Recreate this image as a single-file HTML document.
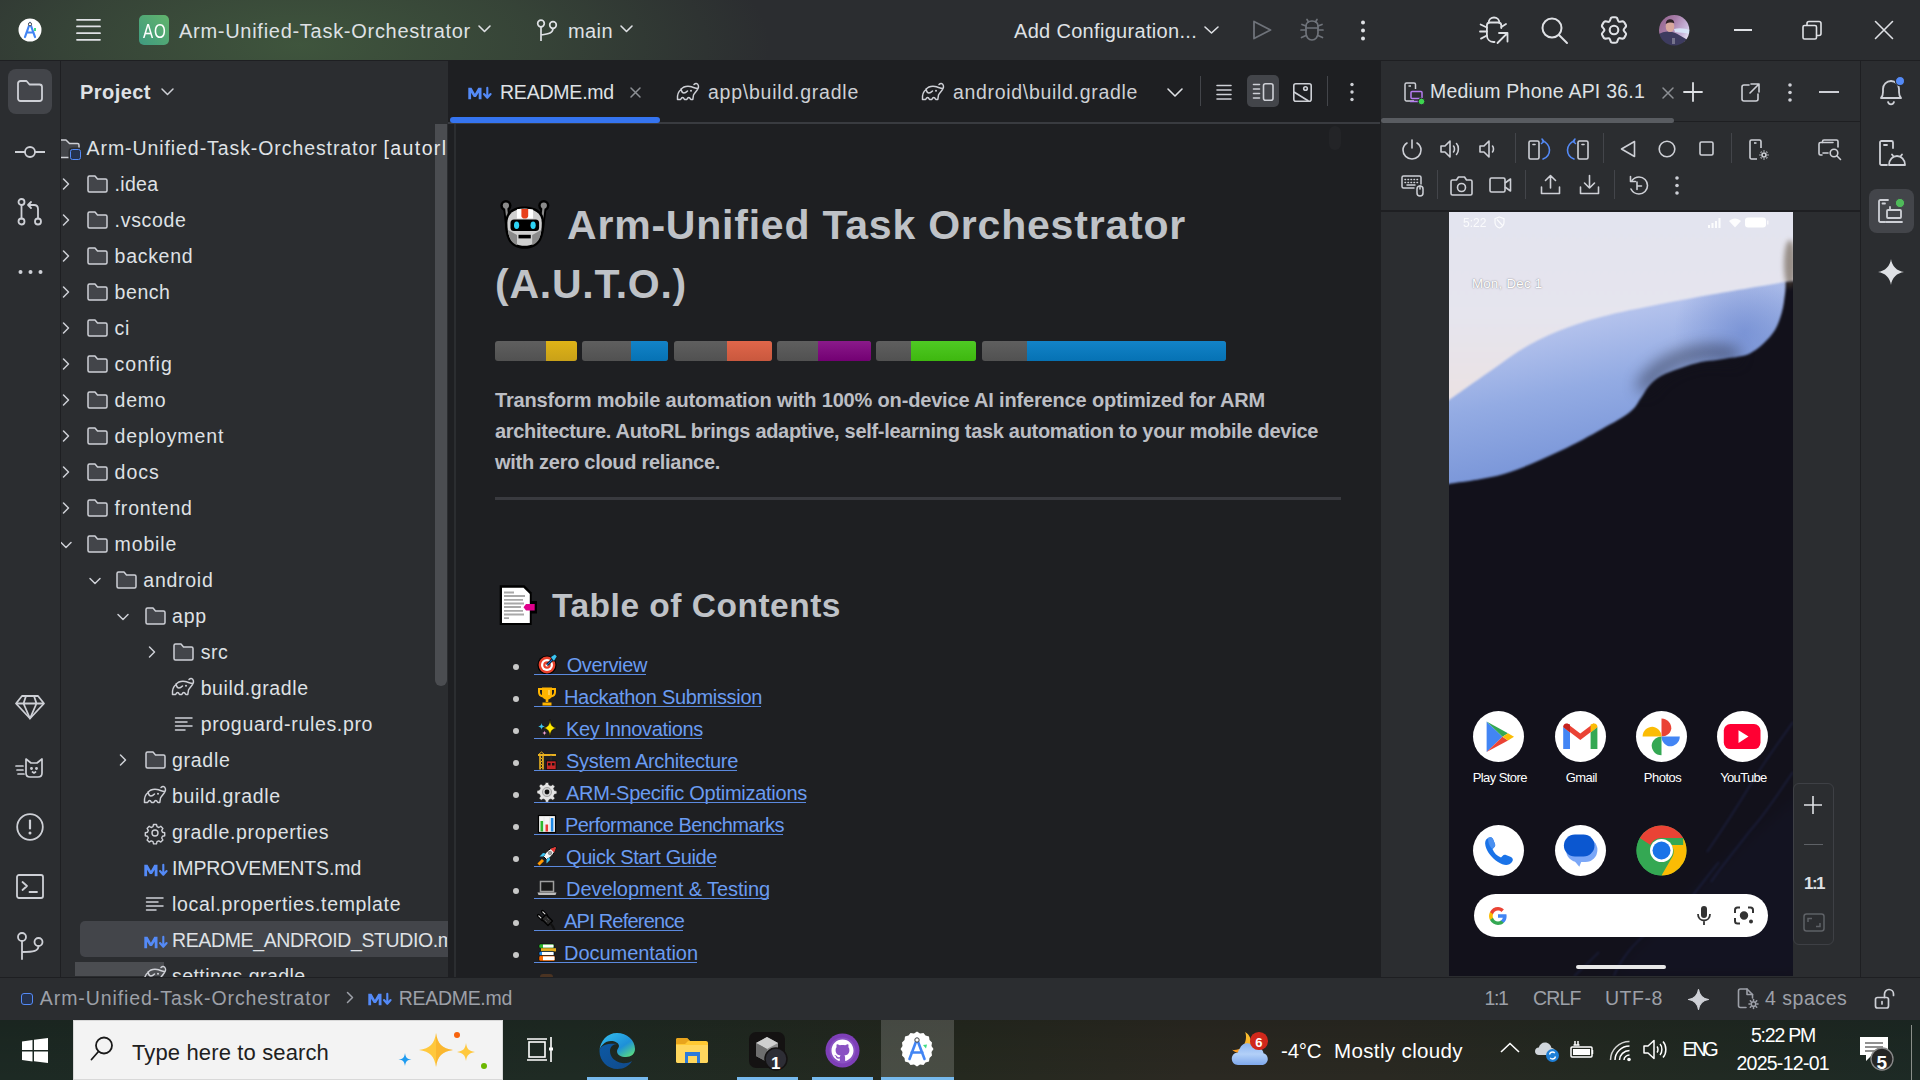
<!DOCTYPE html>
<html><head><meta charset="utf-8">
<style>
*{box-sizing:border-box;margin:0;padding:0}
html,body{width:1920px;height:1080px;overflow:hidden;background:#2B2D30;font-family:"Liberation Sans",sans-serif;color:#DFE1E5}
.abs{position:absolute}
svg{position:absolute;overflow:visible}
.t{position:absolute;white-space:nowrap;line-height:1}
</style></head><body>
<div class="abs" style="left:0px;top:0px;width:1920px;height:1080px;background:#2B2D30;border-radius:0px;"></div>
<div class="abs" style="left:0px;top:0px;width:1000px;height:60px;background:radial-gradient(ellipse 470px 170px at 300px 45px, rgba(86,132,76,.46) 0%, rgba(86,132,76,.26) 50%, rgba(86,132,76,0) 100%);border-radius:0px;"></div>
<div class="abs" style="left:0px;top:60px;width:1920px;height:1px;background:#1E1F22;border-radius:0px;"></div>
<div class="abs" style="left:60px;top:61px;width:1px;height:917px;background:#1E1F22;border-radius:0px;"></div>
<div class="abs" style="left:448px;top:61px;width:932px;height:917px;background:#1E1F22;border-radius:0px;"></div>
<div class="abs" style="left:1380px;top:61px;width:1px;height:917px;background:#1E1F22;border-radius:0px;"></div>
<div class="abs" style="left:1860px;top:61px;width:1px;height:917px;background:#1E1F22;border-radius:0px;"></div>
<div class="abs" style="left:0px;top:977px;width:1920px;height:1px;background:#1E1F22;border-radius:0px;"></div>
<svg style="left:18px;top:18px;" width="24" height="24" viewBox="0 0 24 24"><circle cx="12" cy="12" r="11.5" fill="#FFFFFF"/><path d="M12 5 L7 19 M12 5 L17 19 M8.5 14.5 L15.5 14.5" stroke="#4285F4" stroke-width="2.2" fill="none" stroke-linecap="round"/><circle cx="12" cy="6.2" r="1.6" fill="#fff" stroke="#333" stroke-width="0.8"/><rect x="16" y="10" width="2" height="3" fill="#3DDC84"/></svg>
<svg style="left:76px;top:18px;" width="25" height="24" viewBox="0 0 25 24"><g stroke="#DFE1E5" stroke-width="1.8" stroke-linecap="round"><path d="M1 1.8H24M1 8.4H24M1 15.2H24M1 21.8H24"/></g></svg>
<div class="abs" style="left:139px;top:15px;width:30px;height:30px;background:linear-gradient(225deg,#62B46C 0%,#3F9A80 100%);border-radius:5px;"></div>
<div class="t" style="left:143px;top:21.15px;font-size:20.5px;color:#FFFFFF;font-weight:400;letter-spacing:1.200px;font-family:'Liberation Sans',sans-serif;transform:scaleX(.74);transform-origin:0 0">AO</div>
<div class="t" style="left:179px;top:21.07px;font-size:20px;color:#DFE1E5;font-weight:400;letter-spacing:0.718px;font-family:'Liberation Sans',sans-serif;">Arm-Unified-Task-Orchestrator</div>
<svg style="left:478px;top:25px;" width="13" height="8" viewBox="0 0 13 8"><path d="M1 1L6.5 6.5L12 1" stroke="#DFE1E5" stroke-width="1.6" fill="none" stroke-linecap="round" stroke-linejoin="round"/></svg>
<svg style="left:536px;top:19px;" width="22" height="23" viewBox="0 0 22 23"><g stroke="#DFE1E5" stroke-width="1.7" fill="none"><circle cx="5" cy="4.5" r="3.3"/><circle cx="17" cy="6" r="3.3"/><path d="M5 8V22M17 9.3C17 14 13 15 5 16"/></g></svg>
<div class="t" style="left:568px;top:21.07px;font-size:20px;color:#DFE1E5;font-weight:400;letter-spacing:0.410px;font-family:'Liberation Sans',sans-serif;">main</div>
<svg style="left:620px;top:25px;" width="13" height="8" viewBox="0 0 13 8"><path d="M1 1L6.5 6.5L12 1" stroke="#DFE1E5" stroke-width="1.6" fill="none" stroke-linecap="round" stroke-linejoin="round"/></svg>
<div class="t" style="left:1014px;top:21.07px;font-size:20px;color:#DFE1E5;font-weight:400;letter-spacing:0.311px;font-family:'Liberation Sans',sans-serif;">Add Configuration...</div>
<svg style="left:1204px;top:26px;" width="15" height="8" viewBox="0 0 15 8"><path d="M1 1L7.5 7L14 1" stroke="#DFE1E5" stroke-width="1.6" fill="none" stroke-linecap="round" stroke-linejoin="round"/></svg>
<svg style="left:1251px;top:19px;" width="22" height="22" viewBox="0 0 22 22"><path d="M3 2.5L19.5 11L3 19.5Z" stroke="#6F737A" stroke-width="1.8" fill="none" stroke-linejoin="round"/></svg>
<svg style="left:1298px;top:17px;" width="28" height="26" viewBox="0 0 28 26"><g stroke="#6F737A" stroke-width="1.7" fill="none" stroke-linecap="round"><path d="M8 9.5C8 6 10.5 4 14 4S20 6 20 9.5V16C20 20 17.5 23 14 23S8 20 8 16Z"/><path d="M8 11H20M10.5 5L9 2.5M17.5 5L19 2.5M8 13H3M20 13H25M8 18.5L3.5 20.5M20 18.5L24.5 20.5M8 9L4 7.5M20 9L24 7.5"/></g></svg>
<svg style="left:1360px;top:20px;" width="6" height="22" viewBox="0 0 6 22"><g fill="#DFE1E5"><circle cx="3" cy="2.5" r="2"/><circle cx="3" cy="10.5" r="2"/><circle cx="3" cy="18.5" r="2"/></g></svg>
<svg style="left:1478px;top:15px;" width="32" height="30" viewBox="0 0 32 30"><g stroke="#DFE1E5" stroke-width="1.8" fill="none" stroke-linecap="round" stroke-linejoin="round"><path d="M10.7 7.5C10.7 4.5 13 2.5 16 2.5C19 2.5 21.3 4.5 21.3 7.5"/><path d="M23.3 13V10.5C23.3 8.5 22 7.5 20 7.5H12C10 7.5 8.9 8.5 8.9 10.5V20C8.9 24 11.5 27 15.5 27H16.5"/><path d="M2.6 9.5L8.9 12.5M2 16.5H8.9M3 23.6L8.9 20.5M28 9L23.3 12"/><path d="M19.5 28L29.5 18M21 18H29.5V26.5"/></g></svg>
<svg style="left:1540px;top:16px;" width="30" height="30" viewBox="0 0 30 30"><g stroke="#DFE1E5" stroke-width="2" fill="none" stroke-linecap="round"><circle cx="12" cy="12" r="9.5"/><path d="M19 19L27 27"/></g></svg>
<svg style="left:1600px;top:16px;" width="28" height="28" viewBox="0 0 28 28"><g stroke="#DFE1E5" stroke-width="2.1" fill="none" stroke-linejoin="round"><path d="M11.17 1.72 C11.97 0.99 13.06 1.27 14.00 1.27 C14.94 1.27 16.03 0.99 16.83 1.72 C17.63 2.46 17.74 5.07 18.80 5.69 C19.86 6.30 22.18 5.08 23.22 5.41 C24.25 5.73 24.55 6.82 25.02 7.64 C25.49 8.46 26.29 9.26 26.05 10.32 C25.81 11.38 23.60 12.77 23.60 14.00 C23.60 15.23 25.81 16.62 26.05 17.68 C26.29 18.74 25.49 19.54 25.02 20.36 C24.55 21.18 24.25 22.27 23.22 22.59 C22.18 22.92 19.86 21.70 18.80 22.31 C17.74 22.93 17.63 25.54 16.83 26.28 C16.03 27.01 14.94 26.73 14.00 26.73 C13.06 26.73 11.97 27.01 11.17 26.28 C10.37 25.54 10.26 22.93 9.20 22.31 C8.14 21.70 5.82 22.92 4.78 22.59 C3.75 22.27 3.45 21.18 2.98 20.36 C2.51 19.54 1.71 18.74 1.95 17.68 C2.19 16.62 4.40 15.23 4.40 14.00 C4.40 12.77 2.19 11.38 1.95 10.32 C1.71 9.26 2.51 8.46 2.98 7.64 C3.45 6.82 3.75 5.73 4.78 5.41 C5.82 5.08 8.14 6.30 9.20 5.69 C10.26 5.07 10.37 2.46 11.17 1.72Z"/><circle cx="14" cy="14" r="4.3"/></g></svg>
<svg style="left:1658.8px;top:14.8px;" width="30.4" height="30.4" viewBox="0 0 30.4 30.4"><defs><clipPath id="avc"><circle cx="15.2" cy="15.2" r="15.2"/></clipPath>
<filter id="avb" x="-20%" y="-20%" width="140%" height="140%"><feGaussianBlur stdDeviation=".7"/></filter>
<linearGradient id="avg" x1="0" y1="0" x2="1" y2=".6"><stop offset="0" stop-color="#8E5E86"/><stop offset=".45" stop-color="#A77CA8"/><stop offset=".8" stop-color="#C9B8DC"/><stop offset="1" stop-color="#EDEAF6"/></linearGradient></defs>
<g clip-path="url(#avc)"><g filter="url(#avb)"><rect x="-2" y="-2" width="35" height="35" fill="url(#avg)"/>
<path d="M15 14C20 12.5 26 13 32 15.5V19C26 18 20 17.5 16 17Z" fill="#D8E8FA" opacity=".9"/>
<path d="M-2 33V20C2 17.5 6 16.5 9 16.5C13 16.5 17 18 21 20.5L27 24C30 26 32 28 32 33Z" fill="#3E3A5E"/>
<ellipse cx="11" cy="11.5" rx="4.3" ry="5.6" fill="#D8A89E"/>
<path d="M6.8 9C6.8 5.5 9 4.2 11.3 4.2C13.8 4.2 15.3 5.8 15.3 8.3C13.5 7.3 9.5 7.3 6.8 9Z" fill="#2E2228"/>
<path d="M25 27L33 22V33H24Z" fill="#E8E6F0"/><rect x="13" y="23" width="3" height="6" fill="#9A9AAA" opacity=".6"/></g></g></svg>
<div class="abs" style="left:1734px;top:29px;width:18px;height:1.6px;background:#DFE1E5;border-radius:0px;"></div>
<svg style="left:1802px;top:20px;" width="22" height="20" viewBox="0 0 22 20"><g stroke="#DFE1E5" stroke-width="1.6" fill="none"><rect x="1" y="5.5" width="13.5" height="13.5" rx="1.5"/><path d="M5 5.5V3.5C5 2.4 5.9 1.5 7 1.5H17C18.1 1.5 19 2.4 19 3.5V13.5C19 14.6 18.1 15.5 17 15.5H14.5"/></g></svg>
<svg style="left:1874px;top:20px;" width="20" height="20" viewBox="0 0 20 20"><g stroke="#DFE1E5" stroke-width="1.6" stroke-linecap="round"><path d="M1.5 1.5L18.5 18.5M18.5 1.5L1.5 18.5"/></g></svg>
<div class="abs" style="left:8px;top:69px;width:44px;height:45px;background:#43454A;border-radius:8px;"></div>
<svg style="left:16px;top:79px;" width="28" height="24" viewBox="0 0 28 24"><path d="M2 4.5C2 3.1 3.1 2 4.5 2H10.5L13.5 5.5H23.5C24.9 5.5 26 6.6 26 8V19.5C26 20.9 24.9 22 23.5 22H4.5C3.1 22 2 20.9 2 19.5Z" stroke="#CED0D6" stroke-width="1.8" fill="none" stroke-linejoin="round"/></svg>
<svg style="left:15px;top:145px;" width="30" height="14" viewBox="0 0 30 14"><g stroke="#CED0D6" stroke-width="1.8" fill="none"><circle cx="15" cy="7" r="5"/><path d="M0 7H10M20 7H30"/></g></svg>
<svg style="left:17px;top:198px;" width="26" height="28" viewBox="0 0 26 28"><g stroke="#CED0D6" stroke-width="1.8" fill="none" stroke-linecap="round" stroke-linejoin="round"><circle cx="4.5" cy="4" r="3"/><circle cx="4.5" cy="23.5" r="3"/><circle cx="21" cy="23.5" r="3"/><path d="M4.5 7V20.5M21 20.5V11C21 8.5 19.5 7 17 7H11M14 4L11 7L14 10"/></g></svg>
<svg style="left:18px;top:269px;" width="26" height="6" viewBox="0 0 26 6"><g fill="#CED0D6"><circle cx="2.5" cy="3" r="2"/><circle cx="12.5" cy="3" r="2"/><circle cx="22.5" cy="3" r="2"/></g></svg>
<svg style="left:15px;top:694px;" width="30" height="26" viewBox="0 0 30 26"><g stroke="#CED0D6" stroke-width="1.8" fill="none" stroke-linejoin="round"><path d="M7 2H23L29 9.5L15 24.5L1 9.5Z"/><path d="M1 9.5H29M11 2L8.5 9.5L15 24.5L21.5 9.5L19 2"/></g></svg>
<svg style="left:15px;top:756px;" width="30" height="24" viewBox="0 0 30 24"><g stroke="#CED0D6" stroke-width="1.7" fill="none" stroke-linejoin="round" stroke-linecap="round"><path d="M11 3L16 7H22L27 3V17C27 19.5 25.5 21 23 21H15C12.5 21 11 19.5 11 17Z"/><path d="M1 10H8M2 14H8M3 18H9"/><circle cx="16.5" cy="12.5" r=".6" fill="#CED0D6"/><circle cx="21.5" cy="12.5" r=".6" fill="#CED0D6"/><path d="M17.5 16L19 17L20.5 16"/></g></svg>
<svg style="left:16px;top:813px;" width="28" height="28" viewBox="0 0 28 28"><g stroke="#CED0D6" stroke-width="1.8" fill="none"><circle cx="14" cy="14" r="12.8"/><path d="M14 7.5V15.5" stroke-linecap="round" stroke-width="2.2"/></g><circle cx="14" cy="20" r="1.5" fill="#CED0D6"/></svg>
<svg style="left:16px;top:874px;" width="28" height="26" viewBox="0 0 28 26"><g stroke="#CED0D6" stroke-width="1.8" fill="none" stroke-linejoin="round" stroke-linecap="round"><rect x="1" y="1" width="26" height="23" rx="2"/><path d="M6.5 8L11 12L6.5 16M13.5 18H21"/></g></svg>
<svg style="left:17px;top:932px;" width="28" height="28" viewBox="0 0 28 28"><g stroke="#CED0D6" stroke-width="1.8" fill="none" stroke-linecap="round"><circle cx="5" cy="5" r="4"/><circle cx="21.5" cy="10" r="4"/><path d="M5 9V27M21.5 14C21.5 19 17 20 5 20"/></g></svg>
<div class="t" style="left:80px;top:82.07px;font-size:20px;color:#DFE1E5;font-weight:700;letter-spacing:0.455px;font-family:'Liberation Sans',sans-serif;">Project</div>
<svg style="left:161px;top:88px;" width="13" height="8" viewBox="0 0 13 8"><path d="M1 1L6.5 6.5L12 1" stroke="#CED0D6" stroke-width="1.5" fill="none" stroke-linecap="round" stroke-linejoin="round"/></svg>
<div class="abs" style="left:80px;top:921px;width:368px;height:36px;background:#43454A;border-radius:0px;border-radius:5px 0 0 5px"></div>
<div class="abs" style="left:435px;top:124px;width:12px;height:562px;background:#4B4D51;border-radius:0px;border-radius:0 0 6px 6px"></div>
<div class="abs" style="left:75px;top:962px;width:89px;height:14px;background:#4B4D51;border-radius:0px;"></div>
<div class="abs" style="left:61px;top:120px;width:386px;height:857px;overflow:hidden">
<svg style="left:-11px;top:18.80000000000001px;" width="31" height="21" viewBox="0 0 31 21"><path d="M1 2.5C1 1.7 1.7 1 2.5 1H16L19.5 4.5H27.5C28.3 4.5 29 5.2 29 6V17C29 17.8 28.3 18.5 27.5 18.5H2.5C1.7 18.5 1 17.8 1 17Z" fill="#43454A" stroke="#CED0D6" stroke-width="1.5" stroke-linejoin="round"/></svg>
<div class="abs" style="left:9.299999999999997px;top:29.30000000000001px;width:11px;height:11px;background:#25324D;border-radius:2.5px;border:1.6px solid #548AF7;box-shadow:0 0 0 1.5px #2B2D30"></div>
<div class="t" style="left:25.599999999999994px;top:19.29px;font-size:19.5px;color:#DFE1E5;font-weight:400;letter-spacing:0.918px;font-family:'Liberation Sans',sans-serif;">Arm-Unified-Task-Orchestrator</div>
<div class="t" style="left:322.5px;top:19.29px;font-size:19.5px;color:#E6E8EC;font-weight:400;letter-spacing:1.400px;font-family:'Liberation Sans',sans-serif;">[autorl</div>
<svg style="left:1.0px;top:57.80000000000001px;" width="8" height="12" viewBox="0 0 8 12"><path d="M1.5 1L6.5 6L1.5 11" stroke="#CED0D6" stroke-width="1.5" fill="none" stroke-linecap="round" stroke-linejoin="round"/></svg>
<svg style="left:26.099999999999994px;top:54.80000000000001px;" width="21" height="18" viewBox="0 0 21 18"><path d="M1 2.5C1 1.7 1.7 1 2.5 1H8L10.5 4H18.5C19.3 4 20 4.7 20 5.5V15.5C20 16.3 19.3 17 18.5 17H2.5C1.7 17 1 16.3 1 15.5Z" fill="#43454A" stroke="#CED0D6" stroke-width="1.5" stroke-linejoin="round"/></svg>
<div class="t" style="left:53.599999999999994px;top:55.29px;font-size:19.5px;color:#DFE1E5;font-weight:400;letter-spacing:0.281px;font-family:'Liberation Sans',sans-serif;">.idea</div>
<svg style="left:1.0px;top:93.80000000000001px;" width="8" height="12" viewBox="0 0 8 12"><path d="M1.5 1L6.5 6L1.5 11" stroke="#CED0D6" stroke-width="1.5" fill="none" stroke-linecap="round" stroke-linejoin="round"/></svg>
<svg style="left:26.099999999999994px;top:90.80000000000001px;" width="21" height="18" viewBox="0 0 21 18"><path d="M1 2.5C1 1.7 1.7 1 2.5 1H8L10.5 4H18.5C19.3 4 20 4.7 20 5.5V15.5C20 16.3 19.3 17 18.5 17H2.5C1.7 17 1 16.3 1 15.5Z" fill="#43454A" stroke="#CED0D6" stroke-width="1.5" stroke-linejoin="round"/></svg>
<div class="t" style="left:53.599999999999994px;top:91.29px;font-size:19.5px;color:#DFE1E5;font-weight:400;letter-spacing:0.685px;font-family:'Liberation Sans',sans-serif;">.vscode</div>
<svg style="left:1.0px;top:129.8px;" width="8" height="12" viewBox="0 0 8 12"><path d="M1.5 1L6.5 6L1.5 11" stroke="#CED0D6" stroke-width="1.5" fill="none" stroke-linecap="round" stroke-linejoin="round"/></svg>
<svg style="left:26.099999999999994px;top:126.80000000000001px;" width="21" height="18" viewBox="0 0 21 18"><path d="M1 2.5C1 1.7 1.7 1 2.5 1H8L10.5 4H18.5C19.3 4 20 4.7 20 5.5V15.5C20 16.3 19.3 17 18.5 17H2.5C1.7 17 1 16.3 1 15.5Z" fill="#43454A" stroke="#CED0D6" stroke-width="1.5" stroke-linejoin="round"/></svg>
<div class="t" style="left:53.599999999999994px;top:127.29px;font-size:19.5px;color:#DFE1E5;font-weight:400;letter-spacing:0.709px;font-family:'Liberation Sans',sans-serif;">backend</div>
<svg style="left:1.0px;top:165.8px;" width="8" height="12" viewBox="0 0 8 12"><path d="M1.5 1L6.5 6L1.5 11" stroke="#CED0D6" stroke-width="1.5" fill="none" stroke-linecap="round" stroke-linejoin="round"/></svg>
<svg style="left:26.099999999999994px;top:162.8px;" width="21" height="18" viewBox="0 0 21 18"><path d="M1 2.5C1 1.7 1.7 1 2.5 1H8L10.5 4H18.5C19.3 4 20 4.7 20 5.5V15.5C20 16.3 19.3 17 18.5 17H2.5C1.7 17 1 16.3 1 15.5Z" fill="#43454A" stroke="#CED0D6" stroke-width="1.5" stroke-linejoin="round"/></svg>
<div class="t" style="left:53.599999999999994px;top:163.29px;font-size:19.5px;color:#DFE1E5;font-weight:400;letter-spacing:0.552px;font-family:'Liberation Sans',sans-serif;">bench</div>
<svg style="left:1.0px;top:201.8px;" width="8" height="12" viewBox="0 0 8 12"><path d="M1.5 1L6.5 6L1.5 11" stroke="#CED0D6" stroke-width="1.5" fill="none" stroke-linecap="round" stroke-linejoin="round"/></svg>
<svg style="left:26.099999999999994px;top:198.8px;" width="21" height="18" viewBox="0 0 21 18"><path d="M1 2.5C1 1.7 1.7 1 2.5 1H8L10.5 4H18.5C19.3 4 20 4.7 20 5.5V15.5C20 16.3 19.3 17 18.5 17H2.5C1.7 17 1 16.3 1 15.5Z" fill="#43454A" stroke="#CED0D6" stroke-width="1.5" stroke-linejoin="round"/></svg>
<div class="t" style="left:53.599999999999994px;top:199.29px;font-size:19.5px;color:#DFE1E5;font-weight:400;letter-spacing:0.553px;font-family:'Liberation Sans',sans-serif;">ci</div>
<svg style="left:1.0px;top:237.8px;" width="8" height="12" viewBox="0 0 8 12"><path d="M1.5 1L6.5 6L1.5 11" stroke="#CED0D6" stroke-width="1.5" fill="none" stroke-linecap="round" stroke-linejoin="round"/></svg>
<svg style="left:26.099999999999994px;top:234.8px;" width="21" height="18" viewBox="0 0 21 18"><path d="M1 2.5C1 1.7 1.7 1 2.5 1H8L10.5 4H18.5C19.3 4 20 4.7 20 5.5V15.5C20 16.3 19.3 17 18.5 17H2.5C1.7 17 1 16.3 1 15.5Z" fill="#43454A" stroke="#CED0D6" stroke-width="1.5" stroke-linejoin="round"/></svg>
<div class="t" style="left:53.599999999999994px;top:235.29px;font-size:19.5px;color:#DFE1E5;font-weight:400;letter-spacing:1.026px;font-family:'Liberation Sans',sans-serif;">config</div>
<svg style="left:1.0px;top:273.8px;" width="8" height="12" viewBox="0 0 8 12"><path d="M1.5 1L6.5 6L1.5 11" stroke="#CED0D6" stroke-width="1.5" fill="none" stroke-linecap="round" stroke-linejoin="round"/></svg>
<svg style="left:26.099999999999994px;top:270.8px;" width="21" height="18" viewBox="0 0 21 18"><path d="M1 2.5C1 1.7 1.7 1 2.5 1H8L10.5 4H18.5C19.3 4 20 4.7 20 5.5V15.5C20 16.3 19.3 17 18.5 17H2.5C1.7 17 1 16.3 1 15.5Z" fill="#43454A" stroke="#CED0D6" stroke-width="1.5" stroke-linejoin="round"/></svg>
<div class="t" style="left:53.599999999999994px;top:271.29px;font-size:19.5px;color:#DFE1E5;font-weight:400;letter-spacing:0.755px;font-family:'Liberation Sans',sans-serif;">demo</div>
<svg style="left:1.0px;top:309.8px;" width="8" height="12" viewBox="0 0 8 12"><path d="M1.5 1L6.5 6L1.5 11" stroke="#CED0D6" stroke-width="1.5" fill="none" stroke-linecap="round" stroke-linejoin="round"/></svg>
<svg style="left:26.099999999999994px;top:306.8px;" width="21" height="18" viewBox="0 0 21 18"><path d="M1 2.5C1 1.7 1.7 1 2.5 1H8L10.5 4H18.5C19.3 4 20 4.7 20 5.5V15.5C20 16.3 19.3 17 18.5 17H2.5C1.7 17 1 16.3 1 15.5Z" fill="#43454A" stroke="#CED0D6" stroke-width="1.5" stroke-linejoin="round"/></svg>
<div class="t" style="left:53.599999999999994px;top:307.29px;font-size:19.5px;color:#DFE1E5;font-weight:400;letter-spacing:0.877px;font-family:'Liberation Sans',sans-serif;">deployment</div>
<svg style="left:1.0px;top:345.8px;" width="8" height="12" viewBox="0 0 8 12"><path d="M1.5 1L6.5 6L1.5 11" stroke="#CED0D6" stroke-width="1.5" fill="none" stroke-linecap="round" stroke-linejoin="round"/></svg>
<svg style="left:26.099999999999994px;top:342.8px;" width="21" height="18" viewBox="0 0 21 18"><path d="M1 2.5C1 1.7 1.7 1 2.5 1H8L10.5 4H18.5C19.3 4 20 4.7 20 5.5V15.5C20 16.3 19.3 17 18.5 17H2.5C1.7 17 1 16.3 1 15.5Z" fill="#43454A" stroke="#CED0D6" stroke-width="1.5" stroke-linejoin="round"/></svg>
<div class="t" style="left:53.599999999999994px;top:343.29px;font-size:19.5px;color:#DFE1E5;font-weight:400;letter-spacing:0.999px;font-family:'Liberation Sans',sans-serif;">docs</div>
<svg style="left:1.0px;top:381.79999999999995px;" width="8" height="12" viewBox="0 0 8 12"><path d="M1.5 1L6.5 6L1.5 11" stroke="#CED0D6" stroke-width="1.5" fill="none" stroke-linecap="round" stroke-linejoin="round"/></svg>
<svg style="left:26.099999999999994px;top:378.79999999999995px;" width="21" height="18" viewBox="0 0 21 18"><path d="M1 2.5C1 1.7 1.7 1 2.5 1H8L10.5 4H18.5C19.3 4 20 4.7 20 5.5V15.5C20 16.3 19.3 17 18.5 17H2.5C1.7 17 1 16.3 1 15.5Z" fill="#43454A" stroke="#CED0D6" stroke-width="1.5" stroke-linejoin="round"/></svg>
<div class="t" style="left:53.599999999999994px;top:379.29px;font-size:19.5px;color:#DFE1E5;font-weight:400;letter-spacing:0.830px;font-family:'Liberation Sans',sans-serif;">frontend</div>
<svg style="left:-1.0px;top:420.79999999999995px;" width="12" height="8" viewBox="0 0 12 8"><path d="M1 1.5L6 6.5L11 1.5" stroke="#CED0D6" stroke-width="1.5" fill="none" stroke-linecap="round" stroke-linejoin="round"/></svg>
<svg style="left:26.099999999999994px;top:414.79999999999995px;" width="21" height="18" viewBox="0 0 21 18"><path d="M1 2.5C1 1.7 1.7 1 2.5 1H8L10.5 4H18.5C19.3 4 20 4.7 20 5.5V15.5C20 16.3 19.3 17 18.5 17H2.5C1.7 17 1 16.3 1 15.5Z" fill="#43454A" stroke="#CED0D6" stroke-width="1.5" stroke-linejoin="round"/></svg>
<div class="t" style="left:53.599999999999994px;top:415.29px;font-size:19.5px;color:#DFE1E5;font-weight:400;letter-spacing:0.858px;font-family:'Liberation Sans',sans-serif;">mobile</div>
<svg style="left:27.700000000000003px;top:456.79999999999995px;" width="12" height="8" viewBox="0 0 12 8"><path d="M1 1.5L6 6.5L11 1.5" stroke="#CED0D6" stroke-width="1.5" fill="none" stroke-linecap="round" stroke-linejoin="round"/></svg>
<svg style="left:54.79999999999998px;top:450.79999999999995px;" width="21" height="18" viewBox="0 0 21 18"><path d="M1 2.5C1 1.7 1.7 1 2.5 1H8L10.5 4H18.5C19.3 4 20 4.7 20 5.5V15.5C20 16.3 19.3 17 18.5 17H2.5C1.7 17 1 16.3 1 15.5Z" fill="#43454A" stroke="#CED0D6" stroke-width="1.5" stroke-linejoin="round"/></svg>
<div class="t" style="left:82.29999999999998px;top:451.29px;font-size:19.5px;color:#DFE1E5;font-weight:400;letter-spacing:0.734px;font-family:'Liberation Sans',sans-serif;">android</div>
<svg style="left:56.400000000000006px;top:492.79999999999995px;" width="12" height="8" viewBox="0 0 12 8"><path d="M1 1.5L6 6.5L11 1.5" stroke="#CED0D6" stroke-width="1.5" fill="none" stroke-linecap="round" stroke-linejoin="round"/></svg>
<svg style="left:83.5px;top:486.79999999999995px;" width="21" height="18" viewBox="0 0 21 18"><path d="M1 2.5C1 1.7 1.7 1 2.5 1H8L10.5 4H18.5C19.3 4 20 4.7 20 5.5V15.5C20 16.3 19.3 17 18.5 17H2.5C1.7 17 1 16.3 1 15.5Z" fill="#43454A" stroke="#CED0D6" stroke-width="1.5" stroke-linejoin="round"/></svg>
<div class="t" style="left:111.0px;top:487.29px;font-size:19.5px;color:#DFE1E5;font-weight:400;letter-spacing:0.784px;font-family:'Liberation Sans',sans-serif;">app</div>
<svg style="left:87.1px;top:525.8px;" width="8" height="12" viewBox="0 0 8 12"><path d="M1.5 1L6.5 6L1.5 11" stroke="#CED0D6" stroke-width="1.5" fill="none" stroke-linecap="round" stroke-linejoin="round"/></svg>
<svg style="left:112.19999999999999px;top:522.8px;" width="21" height="18" viewBox="0 0 21 18"><path d="M1 2.5C1 1.7 1.7 1 2.5 1H8L10.5 4H18.5C19.3 4 20 4.7 20 5.5V15.5C20 16.3 19.3 17 18.5 17H2.5C1.7 17 1 16.3 1 15.5Z" fill="#43454A" stroke="#CED0D6" stroke-width="1.5" stroke-linejoin="round"/></svg>
<div class="t" style="left:139.7px;top:523.29px;font-size:19.5px;color:#DFE1E5;font-weight:400;letter-spacing:0.567px;font-family:'Liberation Sans',sans-serif;">src</div>
<svg style="left:105.19999999999999px;top:552.8px;" width="30" height="26" viewBox="0 0 30 26"><g stroke="#CED0D6" stroke-width="1.5" fill="none" stroke-linecap="round" stroke-linejoin="round"><path d="M6.5 21.5C6 17 7.5 13.5 10 11.5C12 9 15.5 8 19 8.5C22 9 24 10.5 27 10.5M27 10.5C28 9 27.5 6 25.5 5.5C24.5 5.2 23.5 6 23 6.5M27 10.5C26 13 23.5 15 22.5 17L21.8 21.5H19.8C19 20 18.5 19.5 17.8 19.5C17 19.5 16.5 20 15.8 21.5H13.5C12.8 20 12.3 19.5 11.6 19.5C10.9 19.5 10.4 20 9.6 21.5H6.5M10 11C10.5 13.5 11.5 15 13 15C14.5 15 15.5 14 16.5 13"/></g><circle cx="20" cy="12.8" r="1" fill="#CED0D6"/></svg>
<div class="t" style="left:139.7px;top:559.29px;font-size:19.5px;color:#DFE1E5;font-weight:400;letter-spacing:0.589px;font-family:'Liberation Sans',sans-serif;">build.gradle</div>
<svg style="left:112.69999999999999px;top:595.8px;" width="20" height="16" viewBox="0 0 20 16"><g stroke="#CED0D6" stroke-width="1.5" stroke-linecap="round"><path d="M1.5 2H18M1.5 6H13M1.5 10H18M1.5 14H11"/></g></svg>
<div class="t" style="left:139.7px;top:595.29px;font-size:19.5px;color:#DFE1E5;font-weight:400;letter-spacing:0.665px;font-family:'Liberation Sans',sans-serif;">proguard-rules.pro</div>
<svg style="left:58.400000000000006px;top:633.8px;" width="8" height="12" viewBox="0 0 8 12"><path d="M1.5 1L6.5 6L1.5 11" stroke="#CED0D6" stroke-width="1.5" fill="none" stroke-linecap="round" stroke-linejoin="round"/></svg>
<svg style="left:83.5px;top:630.8px;" width="21" height="18" viewBox="0 0 21 18"><path d="M1 2.5C1 1.7 1.7 1 2.5 1H8L10.5 4H18.5C19.3 4 20 4.7 20 5.5V15.5C20 16.3 19.3 17 18.5 17H2.5C1.7 17 1 16.3 1 15.5Z" fill="#43454A" stroke="#CED0D6" stroke-width="1.5" stroke-linejoin="round"/></svg>
<div class="t" style="left:111.0px;top:631.29px;font-size:19.5px;color:#DFE1E5;font-weight:400;letter-spacing:0.714px;font-family:'Liberation Sans',sans-serif;">gradle</div>
<svg style="left:76.5px;top:660.8px;" width="30" height="26" viewBox="0 0 30 26"><g stroke="#CED0D6" stroke-width="1.5" fill="none" stroke-linecap="round" stroke-linejoin="round"><path d="M6.5 21.5C6 17 7.5 13.5 10 11.5C12 9 15.5 8 19 8.5C22 9 24 10.5 27 10.5M27 10.5C28 9 27.5 6 25.5 5.5C24.5 5.2 23.5 6 23 6.5M27 10.5C26 13 23.5 15 22.5 17L21.8 21.5H19.8C19 20 18.5 19.5 17.8 19.5C17 19.5 16.5 20 15.8 21.5H13.5C12.8 20 12.3 19.5 11.6 19.5C10.9 19.5 10.4 20 9.6 21.5H6.5M10 11C10.5 13.5 11.5 15 13 15C14.5 15 15.5 14 16.5 13"/></g><circle cx="20" cy="12.8" r="1" fill="#CED0D6"/></svg>
<div class="t" style="left:111.0px;top:667.29px;font-size:19.5px;color:#DFE1E5;font-weight:400;letter-spacing:0.664px;font-family:'Liberation Sans',sans-serif;">build.gradle</div>
<svg style="left:84.0px;top:702.8px;" width="20" height="20" viewBox="0 0 20 20"><g stroke="#CED0D6" stroke-width="1.4" fill="none" stroke-linejoin="round"><path d="M8.5 1.5h3l.5 2.2 1.8.8 2-1.2 2.1 2.1-1.2 2 .8 1.8 2.2.5v3l-2.2.5-.8 1.8 1.2 2-2.1 2.1-2-1.2-1.8.8-.5 2.2h-3l-.5-2.2-1.8-.8-2 1.2-2.1-2.1 1.2-2-.8-1.8-2.2-.5v-3l2.2-.5.8-1.8-1.2-2 2.1-2.1 2 1.2 1.8-.8z"/><circle cx="10" cy="10" r="3"/></g></svg>
<div class="t" style="left:111.0px;top:703.29px;font-size:19.5px;color:#DFE1E5;font-weight:400;letter-spacing:0.639px;font-family:'Liberation Sans',sans-serif;">gradle.properties</div>
<svg style="left:82.6px;top:744.3px;" width="26" height="13" viewBox="0 0 26 13"><path d="M0.3 12.2V0.8H3.5L6.9 6.8L10.3 0.8H13.5V12.2H10.7V5.8L8 10H5.8L3.1 5.8V12.2Z" fill="#548AF7"/><path d="M19.3 0.8V10.5M16 7L19.3 10.8L22.6 7" stroke="#548AF7" stroke-width="2.1" fill="none" stroke-linecap="round" stroke-linejoin="round"/></svg>
<div class="t" style="left:111.0px;top:739.29px;font-size:19.5px;color:#DFE1E5;font-weight:400;letter-spacing:-0.099px;font-family:'Liberation Sans',sans-serif;">IMPROVEMENTS.md</div>
<svg style="left:84.0px;top:775.8px;" width="20" height="16" viewBox="0 0 20 16"><g stroke="#CED0D6" stroke-width="1.5" stroke-linecap="round"><path d="M1.5 2H18M1.5 6H13M1.5 10H18M1.5 14H11"/></g></svg>
<div class="t" style="left:111.0px;top:775.29px;font-size:19.5px;color:#DFE1E5;font-weight:400;letter-spacing:0.670px;font-family:'Liberation Sans',sans-serif;">local.properties.template</div>
<svg style="left:82.6px;top:816.3px;" width="26" height="13" viewBox="0 0 26 13"><path d="M0.3 12.2V0.8H3.5L6.9 6.8L10.3 0.8H13.5V12.2H10.7V5.8L8 10H5.8L3.1 5.8V12.2Z" fill="#548AF7"/><path d="M19.3 0.8V10.5M16 7L19.3 10.8L22.6 7" stroke="#548AF7" stroke-width="2.1" fill="none" stroke-linecap="round" stroke-linejoin="round"/></svg>
<div class="t" style="left:111.0px;top:811.29px;font-size:19.5px;color:#DFE1E5;font-weight:400;letter-spacing:-0.376px;font-family:'Liberation Sans',sans-serif;">README_ANDROID_STUDIO.md</div>
<svg style="left:76.5px;top:840.8px;" width="30" height="26" viewBox="0 0 30 26"><g stroke="#CED0D6" stroke-width="1.5" fill="none" stroke-linecap="round" stroke-linejoin="round"><path d="M6.5 21.5C6 17 7.5 13.5 10 11.5C12 9 15.5 8 19 8.5C22 9 24 10.5 27 10.5M27 10.5C28 9 27.5 6 25.5 5.5C24.5 5.2 23.5 6 23 6.5M27 10.5C26 13 23.5 15 22.5 17L21.8 21.5H19.8C19 20 18.5 19.5 17.8 19.5C17 19.5 16.5 20 15.8 21.5H13.5C12.8 20 12.3 19.5 11.6 19.5C10.9 19.5 10.4 20 9.6 21.5H6.5M10 11C10.5 13.5 11.5 15 13 15C14.5 15 15.5 14 16.5 13"/></g><circle cx="20" cy="12.8" r="1" fill="#CED0D6"/></svg>
<div class="t" style="left:111.0px;top:847.29px;font-size:19.5px;color:#DFE1E5;font-weight:400;letter-spacing:0.450px;font-family:'Liberation Sans',sans-serif;">settings.gradle</div>
</div>
<div class="abs" style="left:448px;top:122px;width:932px;height:2px;background:#393B40;border-radius:0px;"></div>
<div class="abs" style="left:450px;top:117px;width:210px;height:6px;background:#3574F0;border-radius:3px;"></div>
<svg style="left:468.3px;top:86.5px;" width="26" height="13" viewBox="0 0 26 13"><path d="M0.3 12.2V0.8H3.5L6.9 6.8L10.3 0.8H13.5V12.2H10.7V5.8L8 10H5.8L3.1 5.8V12.2Z" fill="#548AF7"/><path d="M19.3 0.8V10.5M16 7L19.3 10.8L22.6 7" stroke="#548AF7" stroke-width="2.1" fill="none" stroke-linecap="round" stroke-linejoin="round"/></svg>
<div class="t" style="left:500px;top:82.69px;font-size:19.5px;color:#DFE1E5;font-weight:400;letter-spacing:-0.215px;font-family:'Liberation Sans',sans-serif;">README.md</div>
<svg style="left:630px;top:87px;" width="11" height="11" viewBox="0 0 11 11"><path d="M1 1L10 10M10 1L1 10" stroke="#8C8F94" stroke-width="1.5" stroke-linecap="round"/></svg>
<svg style="left:671px;top:78px;" width="30" height="26" viewBox="0 0 30 26"><g stroke="#CED0D6" stroke-width="1.5" fill="none" stroke-linecap="round" stroke-linejoin="round"><path d="M6.5 21.5C6 17 7.5 13.5 10 11.5C12 9 15.5 8 19 8.5C22 9 24 10.5 27 10.5M27 10.5C28 9 27.5 6 25.5 5.5C24.5 5.2 23.5 6 23 6.5M27 10.5C26 13 23.5 15 22.5 17L21.8 21.5H19.8C19 20 18.5 19.5 17.8 19.5C17 19.5 16.5 20 15.8 21.5H13.5C12.8 20 12.3 19.5 11.6 19.5C10.9 19.5 10.4 20 9.6 21.5H6.5M10 11C10.5 13.5 11.5 15 13 15C14.5 15 15.5 14 16.5 13"/></g><circle cx="20" cy="12.8" r="1" fill="#CED0D6"/></svg>
<div class="t" style="left:708px;top:82.69px;font-size:19.5px;color:#CDD0D5;font-weight:400;letter-spacing:0.764px;font-family:'Liberation Sans',sans-serif;">app\build.gradle</div>
<svg style="left:916px;top:78px;" width="30" height="26" viewBox="0 0 30 26"><g stroke="#CED0D6" stroke-width="1.5" fill="none" stroke-linecap="round" stroke-linejoin="round"><path d="M6.5 21.5C6 17 7.5 13.5 10 11.5C12 9 15.5 8 19 8.5C22 9 24 10.5 27 10.5M27 10.5C28 9 27.5 6 25.5 5.5C24.5 5.2 23.5 6 23 6.5M27 10.5C26 13 23.5 15 22.5 17L21.8 21.5H19.8C19 20 18.5 19.5 17.8 19.5C17 19.5 16.5 20 15.8 21.5H13.5C12.8 20 12.3 19.5 11.6 19.5C10.9 19.5 10.4 20 9.6 21.5H6.5M10 11C10.5 13.5 11.5 15 13 15C14.5 15 15.5 14 16.5 13"/></g><circle cx="20" cy="12.8" r="1" fill="#CED0D6"/></svg>
<div class="t" style="left:953px;top:82.69px;font-size:19.5px;color:#CDD0D5;font-weight:400;letter-spacing:0.685px;font-family:'Liberation Sans',sans-serif;">android\build.gradle</div>
<svg style="left:1167px;top:88px;" width="16" height="9" viewBox="0 0 16 9"><path d="M1 1L8 8L15 1" stroke="#DFE1E5" stroke-width="1.6" fill="none" stroke-linecap="round" stroke-linejoin="round"/></svg>
<div class="abs" style="left:1199.5px;top:76px;width:1.5px;height:30px;background:#43454A;border-radius:0px;"></div>
<svg style="left:1216px;top:84px;" width="16" height="16" viewBox="0 0 16 16"><g stroke="#CED0D6" stroke-width="1.6" stroke-linecap="round"><path d="M1 1.5H15M1 6H15M1 10.5H15M1 15H15"/></g></svg>
<div class="abs" style="left:1247px;top:75px;width:32px;height:32px;background:#43454A;border-radius:5px;"></div>
<svg style="left:1252px;top:83px;" width="22" height="19" viewBox="0 0 22 19"><g stroke="#CED0D6" stroke-width="1.6" fill="none" stroke-linecap="round"><path d="M1.5 1.5H7.5M1.5 6H7.5M1.5 10.5H7.5M1.5 15H7.5"/><rect x="11.5" y="0.8" width="9.5" height="16.5" rx="2"/></g></svg>
<svg style="left:1293px;top:83px;" width="19" height="19" viewBox="0 0 19 19"><g stroke="#CED0D6" stroke-width="1.6" fill="none" stroke-linejoin="round"><rect x="0.8" y="0.8" width="17.4" height="17.4" rx="2"/><circle cx="12.5" cy="5.5" r="1.8"/><path d="M1 9L15.5 18"/></g></svg>
<div class="abs" style="left:1326.5px;top:76px;width:1.5px;height:30px;background:#43454A;border-radius:0px;"></div>
<svg style="left:1349px;top:82px;" width="6" height="20" viewBox="0 0 6 20"><g fill="#CED0D6"><circle cx="3" cy="2.5" r="1.7"/><circle cx="3" cy="10" r="1.7"/><circle cx="3" cy="17.5" r="1.7"/></g></svg>
<div class="abs" style="left:454px;top:124px;width:2px;height:853px;background:#2B2D30;border-radius:0px;"></div>
<div class="abs" style="left:1329px;top:126px;width:12px;height:24px;background:#232427;border-radius:6px;"></div>
<svg style="left:499px;top:199px;" width="50" height="50" viewBox="0 0 50 50"><g>
<path d="M6.9 6.6L9.5 30M44.8 6.6L42 30" stroke="#000" stroke-width="6" stroke-linecap="round"/>
<circle cx="6.9" cy="6.6" r="5.6" fill="#000"/><circle cx="44.8" cy="6.6" r="5.6" fill="#000"/>
<path d="M6.9 6.6L9.5 30M44.8 6.6L42 30" stroke="#8A8A8A" stroke-width="2.2" stroke-linecap="round"/>
<circle cx="6.9" cy="6.6" r="3.1" fill="#8A8A8A"/><circle cx="44.8" cy="6.6" r="3.1" fill="#8A8A8A"/>
<path d="M25.6 7.5C36 7.5 45.2 12 45.2 24C45.2 30 44.5 36 42 41C39 46.5 33 49.8 25.6 49.8C18.2 49.8 12.2 46.5 9.2 41C6.7 36 6 30 6 24C6 12 15.2 7.5 25.6 7.5Z" fill="#000"/>
<path d="M25.6 9.8C34.5 9.8 42.8 13.5 42.8 24C42.8 29.5 42.2 35 40 39.5C37.5 44 32.5 46.8 25.6 46.8C18.7 46.8 13.7 44 11.2 39.5C9 35 8.4 29.5 8.4 24C8.4 13.5 16.7 9.8 25.6 9.8Z" fill="#CFCFCF"/>
<path d="M9 31C9.5 36 10.5 39 12 41.5C14 44 16 45.5 18 46.2V36Z" fill="#8A8A8A"/><path d="M42.2 31C41.7 36 40.7 39 39.2 41.5C37.2 44 35.2 45.5 33.2 46.2V36Z" fill="#8A8A8A"/>
<path d="M17.9 10.3C20.5 9.9 23 9.8 25.6 9.8C28.2 9.8 31.5 10 34.1 10.5V19.5H17.9Z" fill="#FFFFFF"/>
<path d="M22.4 9.9H29.2V17C29.2 18.5 27.8 19.6 25.8 19.6C23.8 19.6 22.4 18.5 22.4 17Z" fill="#E8401C"/>
<rect x="11.5" y="20.5" width="28.6" height="11.6" rx="3.5" fill="#000"/>
<ellipse cx="17.6" cy="26.3" rx="2.6" ry="3.8" fill="#2CD3F5"/><ellipse cx="34.1" cy="26.3" rx="2.6" ry="3.8" fill="#2CD3F5"/>
<rect x="19.5" y="35.8" width="12.3" height="3.6" fill="#000"/>
</g></svg>
<div class="t" style="left:567px;top:204.89px;font-size:41px;color:#BFC2C7;font-weight:700;letter-spacing:0.787px;font-family:'Liberation Sans',sans-serif;">Arm-Unified Task Orchestrator</div>
<div class="t" style="left:495px;top:263.79px;font-size:41px;color:#BFC2C7;font-weight:700;letter-spacing:0.752px;font-family:'Liberation Sans',sans-serif;">(A.U.T.O.)</div>
<div class="abs" style="left:495px;top:341px;width:82px;height:20px;border-radius:3px;overflow:hidden;background:linear-gradient(#5F5F5F,#515151)"><div class="abs" style="left:51px;top:0;width:31px;height:20px;background:linear-gradient(#DFB317,#C9A118)"></div></div>
<div class="abs" style="left:582px;top:341px;width:86px;height:20px;border-radius:3px;overflow:hidden;background:linear-gradient(#5F5F5F,#515151)"><div class="abs" style="left:49px;top:0;width:37px;height:20px;background:linear-gradient(#1283C8,#0672B4)"></div></div>
<div class="abs" style="left:674px;top:341px;width:98px;height:20px;border-radius:3px;overflow:hidden;background:linear-gradient(#5F5F5F,#515151)"><div class="abs" style="left:53px;top:0;width:45px;height:20px;background:linear-gradient(#E0664A,#C9583E)"></div></div>
<div class="abs" style="left:777px;top:341px;width:94px;height:20px;border-radius:3px;overflow:hidden;background:linear-gradient(#5F5F5F,#515151)"><div class="abs" style="left:41px;top:0;width:53px;height:20px;background:linear-gradient(#8A1A8A,#730073)"></div></div>
<div class="abs" style="left:876px;top:341px;width:100px;height:20px;border-radius:3px;overflow:hidden;background:linear-gradient(#5F5F5F,#515151)"><div class="abs" style="left:35px;top:0;width:65px;height:20px;background:linear-gradient(#4FC924,#3EB80F)"></div></div>
<div class="abs" style="left:982px;top:341px;width:244px;height:20px;border-radius:3px;overflow:hidden;background:linear-gradient(#5F5F5F,#515151)"><div class="abs" style="left:45px;top:0;width:199px;height:20px;background:linear-gradient(#1283C8,#0672B4)"></div></div>
<div class="t" style="left:495px;top:389.87px;font-size:20px;color:#BCBEC4;font-weight:700;letter-spacing:-0.168px;font-family:'Liberation Sans',sans-serif;">Transform mobile automation with 100% on-device AI inference optimized for ARM</div>
<div class="t" style="left:495px;top:420.87px;font-size:20px;color:#BCBEC4;font-weight:700;letter-spacing:-0.305px;font-family:'Liberation Sans',sans-serif;">architecture. AutoRL brings adaptive, self-learning task automation to your mobile device</div>
<div class="t" style="left:495px;top:451.87px;font-size:20px;color:#BCBEC4;font-weight:700;letter-spacing:-0.291px;font-family:'Liberation Sans',sans-serif;">with zero cloud reliance.</div>
<div class="abs" style="left:495px;top:497px;width:846px;height:3px;background:#393A3F;border-radius:0px;"></div>
<svg style="left:498px;top:584px;" width="42" height="42" viewBox="0 0 42 42"><path d="M1.7 1.3H26.5L33.7 8.5V41H1.7Z" fill="#000"/>
<rect x="25" y="17" width="14" height="12.5" fill="#000"/>
<path d="M4 3.8H25.5L31.8 10V39H4Z" fill="#FFFFFF"/>
<g stroke="#A8A8A8" stroke-width="1.8"><path d="M6 8.5H16M6 12H27M6 15.8H25M6 19.5H26M6 23H23M6 26.8H25M6 30.5H26M6 34.2H11"/></g>
<path d="M28 20H36.7V26.6H28L25.5 23.3Z" fill="#E0008C"/></svg>
<div class="t" style="left:552px;top:589.04px;font-size:33.5px;color:#BFC2C7;font-weight:700;letter-spacing:0.506px;font-family:'Liberation Sans',sans-serif;">Table of Contents</div>
<div class="abs" style="left:513px;top:663.7px;width:6px;height:6px;border-radius:50%;background:#C8C8C8"></div>
<svg style="left:537px;top:654.2px;" width="20" height="20" viewBox="0 0 20 20"><circle cx="10" cy="11" r="9.6" fill="#000"/><circle cx="10" cy="11" r="8.4" fill="#E8412C"/><circle cx="10" cy="11" r="6" fill="#fff"/><circle cx="10" cy="11" r="3.8" fill="#E8412C"/><circle cx="10" cy="11" r="1.6" fill="#fff"/><path d="M10 11L16.5 4.5" stroke="#000" stroke-width="2.6"/><path d="M10 11L16.5 4.5" stroke="#1E6FC8" stroke-width="1.3"/><path d="M13.5 3L18 0L20 2.5L17 7.5Z" fill="#3CC3F0" stroke="#000" stroke-width=".6"/></svg>
<div class="t" style="left:566.7px;top:655.27px;font-size:20px;color:#6A9CF2;font-weight:400;letter-spacing:-0.382px;font-family:'Liberation Sans',sans-serif;">Overview</div>
<div class="abs" style="left:534px;top:673.6px;width:112px;height:1.5px;background:#5B89DE;border-radius:0px;"></div>
<div class="abs" style="left:513px;top:695.7px;width:6px;height:6px;border-radius:50%;background:#C8C8C8"></div>
<svg style="left:537px;top:686.2px;" width="20" height="20" viewBox="0 0 20 20"><path d="M5 1.5H15V8.5C15 11.5 13 13.5 10 13.5S5 11.5 5 8.5Z" fill="#FFB400"/><path d="M5.2 3H2V6C2 8.5 3.5 10 6 10.5M14.8 3H18V6C18 8.5 16.5 10 14 10.5" stroke="#FFB400" stroke-width="2" fill="none"/><path d="M8.7 13H11.3V16H8.7Z" fill="#FFB400"/><path d="M5.5 16.5H14.5V19.5H5.5Z" fill="#FFB400"/><path d="M12 4V9" stroke="#FFE9A0" stroke-width="1"/></svg>
<div class="t" style="left:564px;top:687.27px;font-size:20px;color:#6A9CF2;font-weight:400;letter-spacing:-0.328px;font-family:'Liberation Sans',sans-serif;">Hackathon Submission</div>
<div class="abs" style="left:534px;top:705.6px;width:227px;height:1.5px;background:#5B89DE;border-radius:0px;"></div>
<div class="abs" style="left:513px;top:727.7px;width:6px;height:6px;border-radius:50%;background:#C8C8C8"></div>
<svg style="left:537px;top:718.2px;" width="20" height="20" viewBox="0 0 20 20"><path d="M13 1.5C13.6 7 15 9 19.5 10C15 11 13.6 13 13 18.5C12.4 13 11 11 6.5 10C11 9 12.4 7 13 1.5Z" fill="#FFE800" stroke="#000" stroke-width=".5"/><path d="M4.5 5C4.8 7.3 5.5 8 7.8 8.4C5.5 8.8 4.8 9.5 4.5 11.8C4.2 9.5 3.5 8.8 1.2 8.4C3.5 8 4.2 7.3 4.5 5Z" fill="#3CC8F0"/><path d="M7.5 12.5C7.7 14.2 8.2 14.8 9.9 15C8.2 15.2 7.7 15.8 7.5 17.5C7.3 15.8 6.8 15.2 5.1 15C6.8 14.8 7.3 14.2 7.5 12.5Z" fill="#F0A0D0"/></svg>
<div class="t" style="left:566px;top:719.27px;font-size:20px;color:#6A9CF2;font-weight:400;letter-spacing:-0.355px;font-family:'Liberation Sans',sans-serif;">Key Innovations</div>
<div class="abs" style="left:534px;top:737.6px;width:168px;height:1.5px;background:#5B89DE;border-radius:0px;"></div>
<div class="abs" style="left:513px;top:759.7px;width:6px;height:6px;border-radius:50%;background:#C8C8C8"></div>
<svg style="left:537px;top:750.2px;" width="20" height="20" viewBox="0 0 20 20"><path d="M3 19.5V4M6 19.5V4" stroke="#E8B020" stroke-width="1.6"/><path d="M3 7L6 10L3 13L6 16L3 19" stroke="#E8B020" stroke-width="1" fill="none"/><path d="M1 5H19" stroke="#E8B020" stroke-width="2"/><path d="M4.5 2L8 5M4.5 2L1 5" stroke="#E8B020" stroke-width="1"/><path d="M14 5.5V11" stroke="#333" stroke-width=".8"/><rect x="9.5" y="11" width="9.5" height="8.5" fill="#C62828" stroke="#000" stroke-width=".6"/><rect x="11" y="13" width="2.5" height="2.5" fill="#111"/><rect x="15" y="13" width="2.5" height="2.5" fill="#111"/></svg>
<div class="t" style="left:566px;top:751.27px;font-size:20px;color:#6A9CF2;font-weight:400;letter-spacing:-0.308px;font-family:'Liberation Sans',sans-serif;">System Architecture</div>
<div class="abs" style="left:534px;top:769.6px;width:203px;height:1.5px;background:#5B89DE;border-radius:0px;"></div>
<div class="abs" style="left:513px;top:791.7px;width:6px;height:6px;border-radius:50%;background:#C8C8C8"></div>
<svg style="left:537px;top:782.2px;" width="20" height="20" viewBox="0 0 20 20"><path d="M8.6 0.5h2.8l.5 2.4 2 .9 2-1.3 2 2-1.3 2 .9 2 2.4.5v2.8l-2.4.5-.9 2 1.3 2-2 2-2-1.3-2 .9-.5 2.4H8.6l-.5-2.4-2-.9-2 1.3-2-2 1.3-2-.9-2L0 11.4V8.6l2.4-.5.9-2-1.3-2 2-2 2 1.3 2-.9z" fill="#E4E4E4" stroke="#222" stroke-width=".6"/><circle cx="10" cy="10" r="4.6" fill="#CFCFCF" stroke="#999" stroke-width=".8"/><circle cx="10" cy="10" r="2.4" fill="#111"/></svg>
<div class="t" style="left:566px;top:783.27px;font-size:20px;color:#6A9CF2;font-weight:400;letter-spacing:-0.263px;font-family:'Liberation Sans',sans-serif;">ARM-Specific Optimizations</div>
<div class="abs" style="left:534px;top:801.6px;width:272px;height:1.5px;background:#5B89DE;border-radius:0px;"></div>
<div class="abs" style="left:513px;top:823.7px;width:6px;height:6px;border-radius:50%;background:#C8C8C8"></div>
<svg style="left:537px;top:814.2px;" width="20" height="20" viewBox="0 0 20 20"><rect x="1.5" y="1.5" width="17" height="17" fill="#F5F5F5" stroke="#000" stroke-width="1.2"/><path d="M7 2V18M12.5 2V18" stroke="#DDD" stroke-width=".6"/><rect x="3.5" y="7" width="2.6" height="10.5" fill="#2DB82D"/><rect x="8.5" y="10.5" width="2.6" height="7" fill="#E53935"/><rect x="13.8" y="4" width="2.6" height="13.5" fill="#1E88E5"/></svg>
<div class="t" style="left:565px;top:815.27px;font-size:20px;color:#6A9CF2;font-weight:400;letter-spacing:-0.555px;font-family:'Liberation Sans',sans-serif;">Performance Benchmarks</div>
<div class="abs" style="left:534px;top:833.6px;width:249px;height:1.5px;background:#5B89DE;border-radius:0px;"></div>
<div class="abs" style="left:513px;top:855.7px;width:6px;height:6px;border-radius:50%;background:#C8C8C8"></div>
<svg style="left:537px;top:846.2px;" width="20" height="20" viewBox="0 0 20 20"><path d="M19 1C14 1.5 9 5 6.5 10.5L9.5 13.5C15 11 18.5 6 19 1Z" fill="#F4F4F4" stroke="#000" stroke-width="1"/><path d="M19 1C17 1.3 15 2 13.5 3L17 6.5C18 5 18.7 3 19 1Z" fill="#E53935"/><circle cx="13" cy="7" r="1.8" fill="#9E9E9E" stroke="#555" stroke-width=".5"/><path d="M6.5 10.5L2.5 10.5L6 7L9 7.5M9.5 13.5L9.5 17.5L13 14L12.5 11" fill="#3CC3F0"/><path d="M6 14L1.5 18.5" stroke="#FF9800" stroke-width="3"/></svg>
<div class="t" style="left:566px;top:847.27px;font-size:20px;color:#6A9CF2;font-weight:400;letter-spacing:-0.403px;font-family:'Liberation Sans',sans-serif;">Quick Start Guide</div>
<div class="abs" style="left:534px;top:865.6px;width:182px;height:1.5px;background:#5B89DE;border-radius:0px;"></div>
<div class="abs" style="left:513px;top:887.7px;width:6px;height:6px;border-radius:50%;background:#C8C8C8"></div>
<svg style="left:537px;top:878.2px;" width="20" height="20" viewBox="0 0 20 20"><rect x="3.5" y="3.5" width="13" height="10" fill="#1A1A1A" stroke="#9E9E9E" stroke-width="1.5"/><path d="M0.5 14.5H19.5L18.5 17H1.5Z" fill="#BDBDBD"/></svg>
<div class="t" style="left:566px;top:879.27px;font-size:20px;color:#6A9CF2;font-weight:400;letter-spacing:-0.062px;font-family:'Liberation Sans',sans-serif;">Development &amp; Testing</div>
<div class="abs" style="left:534px;top:897.6px;width:235px;height:1.5px;background:#5B89DE;border-radius:0px;"></div>
<div class="abs" style="left:513px;top:919.7px;width:6px;height:6px;border-radius:50%;background:#C8C8C8"></div>
<svg style="left:537px;top:910.2px;" width="20" height="20" viewBox="0 0 20 20"><path d="M1.5 5.5L5.5 9.5M5.5 1.5L9.5 5.5" stroke="#000" stroke-width="3.2" stroke-linecap="round"/><path d="M1.8 5.8L5.2 9.2M5.8 1.8L9.2 5.2" stroke="#DDD" stroke-width="1.1" stroke-linecap="round"/><path d="M4.5 9L9 4.5L15.5 11L11 15.5Z" fill="#2A2A2A" stroke="#000" stroke-width="1.2" stroke-linejoin="round"/><path d="M8 10L10 12M10 8L12 10" stroke="#555" stroke-width=".8"/><path d="M13.5 13.5C15.5 15.5 16.5 17 17.5 20" stroke="#111" stroke-width="2.2" fill="none"/></svg>
<div class="t" style="left:564px;top:911.27px;font-size:20px;color:#6A9CF2;font-weight:400;letter-spacing:-0.775px;font-family:'Liberation Sans',sans-serif;">API Reference</div>
<div class="abs" style="left:534px;top:929.6px;width:149px;height:1.5px;background:#5B89DE;border-radius:0px;"></div>
<div class="abs" style="left:513px;top:951.7px;width:6px;height:6px;border-radius:50%;background:#C8C8C8"></div>
<svg style="left:537px;top:942.2px;" width="20" height="20" viewBox="0 0 20 20"><rect x="2" y="2" width="15" height="4.2" rx="1.5" fill="#2DB82D" stroke="#000" stroke-width=".5"/><rect x="6" y="2.6" width="10.5" height="3" fill="#FFFFFF"/><rect x="4" y="6.2" width="15" height="3.2" fill="#E8B020"/><rect x="2" y="9.4" width="15" height="4.2" rx="1.5" fill="#1E88E5" stroke="#000" stroke-width=".5"/><rect x="5" y="10" width="11.5" height="3" fill="#FFFFFF"/><rect x="2" y="13.6" width="16" height="5.5" rx="1.5" fill="#FF6D00" stroke="#000" stroke-width=".5"/><rect x="6" y="14.4" width="11.5" height="3.8" fill="#FFFFFF"/></svg>
<div class="t" style="left:564px;top:943.27px;font-size:20px;color:#6A9CF2;font-weight:400;letter-spacing:-0.041px;font-family:'Liberation Sans',sans-serif;">Documentation</div>
<div class="abs" style="left:534px;top:961.6px;width:163px;height:1.5px;background:#5B89DE;border-radius:0px;"></div>
<div class="abs" style="left:540px;top:973.5px;width:13px;height:3.5px;background:#4A3322;border-radius:7px 7px 0 0px;"></div>
<svg style="left:1403px;top:82px;" width="22" height="22" viewBox="0 0 22 22"><g fill="none" stroke-linejoin="round"><path d="M11 19H3.5C2.7 19 2 18.3 2 17.5V2.5C2 1.7 2.7 1 3.5 1H11C11.8 1 12.5 1.7 12.5 2.5V7" stroke="#CED0D6" stroke-width="1.5"/><path d="M5.5 4H8" stroke="#CED0D6" stroke-width="1.5"/><rect x="8" y="9.5" width="11" height="7" rx="1" stroke="#B57CF0" stroke-width="1.5"/><path d="M7 19.5H19" stroke="#B57CF0" stroke-width="1.5"/></g><circle cx="18.5" cy="19.5" r="3.3" fill="#3DD54F" stroke="#2B2D30" stroke-width="1"/></svg>
<div class="t" style="left:1430px;top:82.29px;font-size:19.5px;color:#DFE1E5;font-weight:400;letter-spacing:0.223px;font-family:'Liberation Sans',sans-serif;">Medium Phone API 36.1</div>
<svg style="left:1662px;top:87px;" width="12" height="12" viewBox="0 0 12 12"><path d="M1 1L11 11M11 1L1 11" stroke="#8C8F94" stroke-width="1.5" stroke-linecap="round"/></svg>
<svg style="left:1683px;top:82px;" width="20" height="20" viewBox="0 0 20 20"><path d="M10 1V19M1 10H19" stroke="#DFE1E5" stroke-width="1.8" stroke-linecap="round"/></svg>
<svg style="left:1741px;top:83px;" width="19" height="19" viewBox="0 0 19 19"><g stroke="#CED0D6" stroke-width="1.6" fill="none" stroke-linecap="round" stroke-linejoin="round"><path d="M8 2H3C2 2 1 3 1 4V16C1 17 2 18 3 18H15C16 18 17 17 17 16V11"/><path d="M10 1H18V9M18 1L9 10"/></g></svg>
<svg style="left:1787px;top:83px;" width="6" height="19" viewBox="0 0 6 19"><g fill="#CED0D6"><circle cx="3" cy="2" r="1.8"/><circle cx="3" cy="9.5" r="1.8"/><circle cx="3" cy="17" r="1.8"/></g></svg>
<div class="abs" style="left:1819px;top:91px;width:20px;height:1.8px;background:#CED0D6;border-radius:0px;"></div>
<div class="abs" style="left:1381px;top:121px;width:479px;height:1px;background:#1E1F22;border-radius:0px;"></div>
<div class="abs" style="left:1381px;top:118px;width:293px;height:4.5px;background:#595C61;border-radius:2.5px;"></div>
<svg style="left:1402px;top:139px;" width="20" height="21" viewBox="0 0 20 21"><g stroke="#CED0D6" stroke-width="1.6" fill="none" stroke-linecap="round"><path d="M10 1V9"/><path d="M5 4C2.5 5.7 1 8.3 1 11C1 16 5 20 10 20S19 16 19 11C19 8.3 17.5 5.7 15 4"/></g></svg>
<svg style="left:1440px;top:139px;" width="22" height="20" viewBox="0 0 22 20"><g stroke="#CED0D6" stroke-width="1.6" fill="none" stroke-linejoin="round" stroke-linecap="round"><path d="M1 7H5L10 2V18L5 13H1Z"/><path d="M13.5 7C14.8 8.5 14.8 11.5 13.5 13M16.5 4.5C19 7 19 13 16.5 15.5"/></g></svg>
<svg style="left:1479px;top:139px;" width="20" height="20" viewBox="0 0 20 20"><g stroke="#CED0D6" stroke-width="1.6" fill="none" stroke-linejoin="round" stroke-linecap="round"><path d="M1 7H5L10 2V18L5 13H1Z"/><path d="M13.5 7C14.8 8.5 14.8 11.5 13.5 13"/></g></svg>
<div class="abs" style="left:1514.5px;top:133px;width:1.5px;height:30px;background:#43454A;border-radius:0px;"></div>
<svg style="left:1528px;top:138px;" width="23" height="22" viewBox="0 0 23 22"><g fill="none" stroke-width="1.6" stroke-linejoin="round" stroke-linecap="round"><rect x="1" y="3" width="10" height="18" rx="1.5" stroke="#CED0D6"/><path d="M5 6.5H7" stroke="#CED0D6"/><path d="M14.5 3C18.5 4 21.5 8 21.5 12C21.5 16 19 19.5 15 21M14 1L16 3.5L13.5 5.5" stroke="#548AF7"/></g></svg>
<svg style="left:1566px;top:138px;" width="23" height="22" viewBox="0 0 23 22"><g fill="none" stroke-width="1.6" stroke-linejoin="round" stroke-linecap="round"><rect x="12" y="3" width="10" height="18" rx="1.5" stroke="#CED0D6"/><path d="M16 6.5H18" stroke="#CED0D6"/><path d="M8.5 3C4.5 4 1.5 8 1.5 12C1.5 16 4 19.5 8 21M9 1L7 3.5L9.5 5.5" stroke="#548AF7"/></g></svg>
<div class="abs" style="left:1602.5px;top:133px;width:1.5px;height:30px;background:#43454A;border-radius:0px;"></div>
<svg style="left:1620px;top:140px;" width="16" height="18" viewBox="0 0 16 18"><path d="M14.5 1.5V16.5L1.5 9Z" stroke="#CED0D6" stroke-width="1.6" fill="none" stroke-linejoin="round"/></svg>
<svg style="left:1658px;top:140px;" width="18" height="18" viewBox="0 0 18 18"><circle cx="9" cy="9" r="7.8" stroke="#CED0D6" stroke-width="1.6" fill="none"/></svg>
<svg style="left:1699px;top:141px;" width="16" height="16" viewBox="0 0 16 16"><rect x="1" y="1" width="13" height="13" rx="1.5" stroke="#CED0D6" stroke-width="1.6" fill="none"/></svg>
<div class="abs" style="left:1730.5px;top:133px;width:1.5px;height:30px;background:#43454A;border-radius:0px;"></div>
<svg style="left:1748px;top:139px;" width="22" height="22" viewBox="0 0 22 22"><g fill="none" stroke="#CED0D6" stroke-width="1.6" stroke-linejoin="round"><path d="M9 20H3.5C2.7 20 2 19.3 2 18.5V2.5C2 1.7 2.7 1 3.5 1H11.5C12.3 1 13 1.7 13 2.5V9"/><path d="M6 4H8.5"/><circle cx="16" cy="16" r="2"/><path d="M16 11.5V12.5M16 19.5V20.5M11.5 16H12.5M19.5 16H20.5M12.8 12.8L13.5 13.5M18.5 18.5L19.2 19.2M12.8 19.2L13.5 18.5M18.5 13.5L19.2 12.8"/></g></svg>
<svg style="left:1818px;top:139px;" width="24" height="22" viewBox="0 0 24 22"><g fill="none" stroke="#CED0D6" stroke-width="1.6" stroke-linejoin="round" stroke-linecap="round"><path d="M4 16H2.5C1.7 16 1 15.3 1 14.5V5C1 4.2 1.7 3.5 2.5 3.5H15"/><path d="M4.5 3.5V2.5C4.5 1.7 5.2 1 6 1H18.5C19.3 1 20 1.7 20 2.5V8"/><path d="M10 14H5"/><circle cx="16" cy="14" r="3.8"/><path d="M18.8 16.8L22.5 20.5"/></g></svg>
<svg style="left:1401px;top:175px;" width="24" height="22" viewBox="0 0 24 22"><g fill="none" stroke="#CED0D6" stroke-width="1.5" stroke-linejoin="round" stroke-linecap="round"><path d="M13 13H2.5C1.7 13 1 12.3 1 11.5V2.5C1 1.7 1.7 1 2.5 1H18.5C19.3 1 20 1.7 20 2.5V9"/><path d="M4 4.5H4.5M7 4.5H7.5M10 4.5H10.5M13 4.5H13.5M16 4.5H16.5M4 7.5H4.5M7 7.5H7.5M10 7.5H10.5M13 7.5H13.5M16 7.5H16.5M6 10H14"/><rect x="16" y="11" width="6" height="10" rx="3"/><path d="M19 11V14"/></g></svg>
<div class="abs" style="left:1436.5px;top:170px;width:1.5px;height:29px;background:#43454A;border-radius:0px;"></div>
<svg style="left:1450px;top:175px;" width="23" height="21" viewBox="0 0 23 21"><g fill="none" stroke="#CED0D6" stroke-width="1.6" stroke-linejoin="round"><path d="M2.5 5H6.5L8.5 2H14.5L16.5 5H20.5C21.3 5 22 5.7 22 6.5V18.5C22 19.3 21.3 20 20.5 20H2.5C1.7 20 1 19.3 1 18.5V6.5C1 5.7 1.7 5 2.5 5Z"/><circle cx="11.5" cy="12.5" r="4"/></g></svg>
<svg style="left:1489px;top:176px;" width="23" height="18" viewBox="0 0 23 18"><g fill="none" stroke="#CED0D6" stroke-width="1.6" stroke-linejoin="round"><rect x="1" y="2" width="15" height="14" rx="1.5"/><path d="M16 7L21.5 3V15L16 11"/></g></svg>
<div class="abs" style="left:1524.5px;top:170px;width:1.5px;height:29px;background:#43454A;border-radius:0px;"></div>
<svg style="left:1540px;top:174px;" width="21" height="21" viewBox="0 0 21 21"><g fill="none" stroke="#CED0D6" stroke-width="1.6" stroke-linejoin="round" stroke-linecap="round"><path d="M10.5 14V1.5M5.5 6.5L10.5 1.5L15.5 6.5M1.5 13V19.5H19.5V13"/></g></svg>
<svg style="left:1579px;top:174px;" width="21" height="21" viewBox="0 0 21 21"><g fill="none" stroke="#CED0D6" stroke-width="1.6" stroke-linejoin="round" stroke-linecap="round"><path d="M10.5 1.5V14M5.5 9L10.5 14L15.5 9M1.5 13V19.5H19.5V13"/></g></svg>
<div class="abs" style="left:1613.5px;top:170px;width:1.5px;height:29px;background:#43454A;border-radius:0px;"></div>
<svg style="left:1628px;top:175px;" width="21" height="21" viewBox="0 0 21 21"><g fill="none" stroke="#CED0D6" stroke-width="1.6" stroke-linejoin="round" stroke-linecap="round"><path d="M4 5.5C5.8 3.2 8.5 2 11 2C15.8 2 19.5 5.8 19.5 10.5S15.8 19 11 19C7.5 19 4.5 17 3 14"/><path d="M2.5 1.5V6.5H7.5"/><path d="M9 7V11H13.5M9 11V14.5"/></g></svg>
<svg style="left:1674px;top:176px;" width="6" height="19" viewBox="0 0 6 19"><g fill="#CED0D6"><circle cx="3" cy="2" r="1.8"/><circle cx="3" cy="9.5" r="1.8"/><circle cx="3" cy="17" r="1.8"/></g></svg>
<div class="abs" style="left:1381px;top:210px;width:479px;height:1.5px;background:#1E1F22;border-radius:0px;"></div>
<div class="abs" style="left:1449px;top:212px;width:344px;height:764px;overflow:hidden;background:#13121C">
<svg style="left:0;top:0" width="344" height="764" viewBox="0 0 344 764">
<defs>
<linearGradient id="wl" gradientUnits="userSpaceOnUse" x1="0" y1="0" x2="0" y2="190"><stop offset="0" stop-color="#E3E4EF"/><stop offset=".55" stop-color="#E6E5EE"/><stop offset="1" stop-color="#EBE2E3"/></linearGradient>
<linearGradient id="wb" gradientUnits="userSpaceOnUse" x1="150" y1="95" x2="185" y2="255"><stop offset="0" stop-color="#B9C6EE"/><stop offset=".45" stop-color="#93ABE3"/><stop offset="1" stop-color="#7491D6"/></linearGradient>
<filter id="b1" filterUnits="userSpaceOnUse" x="-50" y="-50" width="450" height="900" color-interpolation-filters="sRGB"><feGaussianBlur stdDeviation="1.3"/></filter>
<filter id="b2" filterUnits="userSpaceOnUse" x="-50" y="-50" width="450" height="900" color-interpolation-filters="sRGB"><feGaussianBlur stdDeviation="2.5"/></filter>
<filter id="b3" filterUnits="userSpaceOnUse" x="-50" y="-50" width="450" height="900" color-interpolation-filters="sRGB"><feGaussianBlur stdDeviation="8"/></filter>
</defs>
<rect x="0" y="0" width="344" height="764" fill="url(#wb)"/>
<radialGradient id="rdk" gradientUnits="userSpaceOnUse" cx="295" cy="120" r="70"><stop offset="0" stop-color="#5F7CC8" stop-opacity=".55"/><stop offset="1" stop-color="#5F7CC8" stop-opacity="0"/></radialGradient>
<rect x="200" y="60" width="150" height="140" fill="url(#rdk)"/>
<path d="M-10 -10H354V68L336 70 C323.3 72.2 283.2 78.8 260.0 83.0 C236.8 87.2 213.7 91.7 197.0 95.0 C180.3 98.3 172.8 99.7 160.0 103.0 C147.2 106.3 133.3 110.0 120.0 115.0 C106.7 120.0 93.3 125.5 80.0 133.0 C66.7 140.5 53.3 150.8 40.0 160.0 C26.7 169.2 8.3 182.2 0.0 188.0 C-8.3 193.8 -8.3 193.8 -10.0 195.0 Z" fill="url(#wl)" filter="url(#b1)"/>
<path d="M-10 274 C-8.3 273.7 -10.8 274.0 0.0 272.0 C10.8 270.0 36.5 267.5 55.0 262.0 C73.5 256.5 94.7 246.5 111.0 239.0 C127.3 231.5 141.3 223.5 153.0 217.0 C164.7 210.5 174.5 205.2 181.0 200.0 C187.5 194.8 188.8 190.3 192.0 186.0 C195.2 181.7 196.7 177.7 200.0 174.0 C203.3 170.3 206.7 167.0 212.0 164.0 C217.3 161.0 225.3 158.3 232.0 156.0 C238.7 153.7 246.0 151.3 252.0 150.0 C258.0 148.7 263.3 148.7 268.0 148.0 C272.7 147.3 276.7 146.5 280.0 146.0 C283.3 145.5 284.7 145.7 288.0 145.0 C291.3 144.3 295.7 144.2 300.0 142.0 C304.3 139.8 309.7 136.0 314.0 132.0 C318.3 128.0 322.8 123.3 326.0 118.0 C329.2 112.7 331.3 106.0 333.0 100.0 C334.7 94.0 335.3 87.0 336.0 82.0 C336.7 77.0 336.8 72.0 337.0 70.0 L354 68V774H-10Z" fill="#12111B" filter="url(#b1)"/>

<path d="M192 178C205 155 230 142 262 140C275 140 283 142 289 144" stroke="#12111B" stroke-width="12" fill="none" opacity=".55" filter="url(#b3)"/>
<ellipse cx="341" cy="52" rx="6" ry="24" fill="#5A4A36" opacity=".55" filter="url(#b2)"/>
<path d="M150 780C200 720 270 650 354 580V764H150Z" fill="#1C2145" opacity=".16" filter="url(#b3)"/>
</svg>
<svg style="left:0;top:0" width="344" height="764" viewBox="0 0 344 764"><g stroke="#242C5C" stroke-width="1.5" fill="none" opacity=".5" filter="url(#b1)">
<path d="M344 510C330 530 315 550 300 575C288 595 275 615 258 640"/>
<path d="M344 560C330 580 318 600 300 620C285 640 272 655 262 670"/>
<path d="M270 650C255 668 240 690 225 705"/>
<path d="M200 720C185 730 170 750 165 764M150 740C140 750 130 760 125 764"/>
</g></svg>
<div class="t" style="left:14px;top:5px;font-size:12px;color:#FFFFFF;opacity:.85">5:22</div>
<svg style="left:45px;top:4px;" width="11" height="13" viewBox="0 0 11 13"><path d="M5.5 1L10 2.6V6.2C10 9 8.1 11 5.5 12C2.9 11 1 9 1 6.2V2.6Z M3 3.5L8.5 9.5" stroke="#fff" stroke-width="1.2" fill="none" opacity=".85"/></svg>
<svg style="left:259px;top:6px;" width="14" height="10" viewBox="0 0 14 10"><g fill="#fff" opacity=".9"><rect x="0" y="7" width="2" height="3"/><rect x="3.5" y="5" width="2" height="5"/><rect x="7" y="3" width="2" height="7"/><rect x="10.5" y="0" width="2" height="10"/></g></svg>
<svg style="left:279px;top:5px;" width="14" height="11" viewBox="0 0 14 11"><path d="M1 4C4.5 0.5 9.5 0.5 13 4L7 10.5Z" fill="#fff" opacity=".9"/></svg>
<svg style="left:296px;top:5px;" width="24" height="11" viewBox="0 0 24 11"><rect x="0" y="0.5" width="21" height="10" rx="3" fill="#fff"/><rect x="22" y="3.5" width="1.5" height="4" fill="#fff" opacity=".7"/></svg>
<div class="t" style="left:22.90000000000009px;top:64.74px;font-size:13.3px;color:#FFFFFF;font-weight:400;letter-spacing:0.250px;font-family:'Liberation Sans',sans-serif;text-shadow:0 0 1.5px rgba(0,0,0,.55)">Mon, Dec 1</div>
<div class="abs" style="left:24.4px;top:498.8px;width:51px;height:51px;border-radius:50%;background:#FFFFFF"></div>
<svg style="left:24.4px;top:498.8px" width="51" height="51" viewBox="0 0 51 51"><path d="M13.6 10.5L29.5 25.8L13.6 41.1Z" fill="#4285F4"/><path d="M13.6 10.5L35 22.2L29.5 25.8Z" fill="#34A853"/><path d="M13.6 41.1L35 29.4L29.5 25.8Z" fill="#EA4335"/><path d="M35 22.2L41 25.8L35 29.4L29.5 25.8Z" fill="#FBBC04"/></svg>
<div class="abs" style="left:106.1px;top:498.8px;width:51px;height:51px;border-radius:50%;background:#FFFFFF"></div>
<svg style="left:106.1px;top:498.8px" width="51" height="51" viewBox="0 0 51 51"><path d="M8.2 16V38.1H15V21.5Z" fill="#4285F4"/><path d="M35.6 21.5V38.1H42.4V16Z" fill="#34A853"/><path d="M8.2 16L25.3 29L42.4 16L38.5 12.5L25.3 22.5L12.1 12.5Z" fill="#EA4335"/><path d="M8.2 16L15 21.5V13.5L12.1 12.5C10 12 8.2 13.5 8.2 16Z" fill="#C5221F"/><path d="M42.4 16L35.6 21.5V13.5L38.5 12.5C40.6 12 42.4 13.5 42.4 16Z" fill="#FBBC04"/></svg>
<div class="abs" style="left:187.2px;top:498.8px;width:51px;height:51px;border-radius:50%;background:#FFFFFF"></div>
<svg style="left:187.2px;top:498.8px" width="51" height="51" viewBox="0 0 51 51"><path d="M25.5 25.5V7.5C31.8 7.5 35.3 12.7 35.3 17.3C35.3 20.8 31.8 25.5 25.5 25.5Z" fill="#EA4335"/><path d="M25.5 25.5H43.8C43.8 31.8 38.6 35.3 34 35.3C30.5 35.3 25.5 31.8 25.5 25.5Z" fill="#4285F4"/><path d="M25.5 25.5V44.2C19.2 44.2 15.7 39 15.7 34.4C15.7 30.9 19.2 25.5 25.5 25.5Z" fill="#34A853"/><path d="M25.5 25.5H6.6C6.6 19.2 11.8 15.7 16.4 15.7C19.9 15.7 25.5 19.2 25.5 25.5Z" fill="#FBBC04"/></svg>
<div class="abs" style="left:268.1px;top:498.8px;width:51px;height:51px;border-radius:50%;background:#FFFFFF"></div>
<svg style="left:268.1px;top:498.8px" width="51" height="51" viewBox="0 0 51 51"><rect x="6.8" y="13.1" width="36.7" height="25" rx="6.5" fill="#FF0033"/><path d="M21.5 19.2L31.5 25.6L21.5 32Z" fill="#fff"/></svg>
<div class="abs" style="left:24.4px;top:612.9px;width:51px;height:51px;border-radius:50%;background:#FFFFFF"></div>
<svg style="left:24.4px;top:612.9px" width="51" height="51" viewBox="0 0 51 51"><path d="M15 13C17 11.5 19 12 20 14L22 19C22.5 20.5 22 21.5 21 22.5L19.5 24C21 28 24 31 28 32.5L29.5 31C30.5 30 31.5 29.5 33 30L38 32C40 33 40.5 35 39 37C36 41 31 41 25 37C19 33 14 27 12.5 21C11.5 17 12.5 14.5 15 13Z" fill="#1A73E8"/><path d="M15 13C17 11.5 19 12 20 14L22 19C22.5 20.5 22 21.5 21 22.5L19.5 24C17 22 15 18 15 13Z" fill="#4A90F0"/></svg>
<div class="abs" style="left:106.1px;top:612.9px;width:51px;height:51px;border-radius:50%;background:#FFFFFF"></div>
<svg style="left:106.1px;top:612.9px" width="51" height="51" viewBox="0 0 51 51"><rect x="11" y="13" width="31.4" height="24" rx="12" fill="#7BA7F7"/><path d="M17 33L24.3 41.8L27 35Z" fill="#7BA7F7"/><rect x="8.9" y="9.5" width="30.6" height="22" rx="11" fill="#0B57D0"/></svg>
<div class="abs" style="left:187.2px;top:612.9px;width:51px;height:51px;border-radius:50%;background:transparent"></div>
<svg style="left:187.2px;top:612.9px" width="51" height="51" viewBox="0 0 51 51"><path d="M25.5 25.5m-25 0a25 25 0 1 0 50 0a25 25 0 1 0 -50 0" fill="#34A853"/><path d="M25.5 0.5A25 25 0 0 1 47.2 13H25.5C20 13 16 16 14.5 20L3.8 13A25 25 0 0 1 25.5 0.5Z" fill="#EA4335"/><path d="M47.2 13A25 25 0 0 1 25.5 50.5L36.5 31.5C38.5 28 38 23 35 20H47.2Z" fill="#FBBC04"/><path d="M3.8 13L14.5 31.5C16.5 35 20.5 38 25.5 38H25.3L25.5 50.5A25 25 0 0 1 3.8 13Z" fill="#34A853"/><circle cx="25.5" cy="25.5" r="11.5" fill="#fff"/><circle cx="25.5" cy="25.5" r="9" fill="#1A73E8"/></svg>
<div class="t" style="left:23.700000000000045px;top:559.00px;font-size:13px;color:#FFFFFF;font-weight:400;letter-spacing:-0.588px;font-family:'Liberation Sans',sans-serif;">Play Store</div>
<div class="t" style="left:116.79999999999995px;top:559.00px;font-size:13px;color:#FFFFFF;font-weight:400;letter-spacing:-0.591px;font-family:'Liberation Sans',sans-serif;">Gmail</div>
<div class="t" style="left:194.70000000000005px;top:559.00px;font-size:13px;color:#FFFFFF;font-weight:400;letter-spacing:-0.481px;font-family:'Liberation Sans',sans-serif;">Photos</div>
<div class="t" style="left:271.29999999999995px;top:559.00px;font-size:13px;color:#FFFFFF;font-weight:400;letter-spacing:-0.699px;font-family:'Liberation Sans',sans-serif;">YouTube</div>
<div class="abs" style="left:25px;top:682px;width:294px;height:43px;border-radius:22px;background:#FFFFFF"></div>
<svg style="left:38px;top:693px;" width="22" height="22" viewBox="0 0 22 22"><path d="M19.6 11.2C19.6 10.5 19.5 9.9 19.4 9.3H11V12.8H15.8C15.6 13.9 14.9 14.9 13.9 15.5V17.8H16.8C18.6 16.2 19.6 13.9 19.6 11.2Z" fill="#4285F4"/><path d="M11 20C13.4 20 15.4 19.2 16.8 17.8L13.9 15.5C13.1 16.1 12.1 16.4 11 16.4C8.7 16.4 6.7 14.8 6 12.7H3V15.1C4.5 18 7.5 20 11 20Z" fill="#34A853"/><path d="M6 12.7C5.8 12.1 5.7 11.5 5.7 11S5.8 9.9 6 9.3V6.9H3C2.4 8.1 2 9.5 2 11S2.4 13.9 3 15.1Z" fill="#FBBC04"/><path d="M11 5.6C12.3 5.6 13.5 6.1 14.4 6.9L16.9 4.4C15.4 3 13.4 2 11 2C7.5 2 4.5 4 3 6.9L6 9.3C6.7 7.2 8.7 5.6 11 5.6Z" fill="#EA4335"/></svg>
<svg style="left:247px;top:693px;" width="16" height="22" viewBox="0 0 16 22"><rect x="5" y="1" width="6" height="12" rx="3" fill="#333"/><path d="M2 9C2 13 4.5 15.5 8 15.5S14 13 14 9M8 15.5V20" stroke="#333" stroke-width="1.8" fill="none"/></svg>
<svg style="left:285px;top:694px;" width="22" height="20" viewBox="0 0 22 20"><g stroke="#333" stroke-width="2" fill="none"><path d="M1 7V4C1 2.5 2 1.5 3.5 1.5H6M14 1.5H16.5C18 1.5 19 2.5 19 4V7M1 12V15C1 16.5 2 17.5 3.5 17.5H6"/><circle cx="10" cy="9.5" r="3.2" fill="#333"/></g><circle cx="17" cy="15.5" r="2" fill="#333"/></svg>
<div class="abs" style="left:127px;top:753px;width:90px;height:3.5px;border-radius:2px;background:#E8E8E8"></div>
</div>
<div class="abs" style="left:1793px;top:783px;width:41px;height:162px;background:transparent;border-radius:6px;border:1.3px solid #3E4045"></div>
<svg style="left:1803px;top:795px;" width="20" height="20" viewBox="0 0 20 20"><path d="M10 1V19M1 10H19" stroke="#DFE1E5" stroke-width="1.6"/></svg>
<div class="abs" style="left:1804px;top:843.5px;width:19px;height:1.5px;background:#5E6166;border-radius:0px;"></div>
<div class="t" style="left:1804px;top:875.41px;font-size:17px;color:#DFE1E5;font-weight:700;letter-spacing:-1.526px;font-family:'Liberation Sans',sans-serif;">1:1</div>
<svg style="left:1803px;top:913px;" width="22" height="20" viewBox="0 0 22 20"><g fill="none" stroke="#5E6166" stroke-width="1.5"><rect x="1" y="1" width="20" height="17" rx="2.5"/><path d="M5 9V5.5H9M17 10V13.5H13"/></g></svg>
<svg style="left:1877px;top:77px;" width="28" height="30" viewBox="0 0 28 30"><g fill="none" stroke="#CED0D6" stroke-width="1.8" stroke-linejoin="round" stroke-linecap="round"><path d="M4 21C5.5 19.5 6 18 6 15V12C6 7.5 9.5 4 14 4S22 7.5 22 12V15C22 18 22.5 19.5 24 21Z"/><path d="M11 25C11.5 26.5 12.5 27.3 14 27.3S16.5 26.5 17 25"/></g><circle cx="23" cy="4" r="4.6" fill="#548AF7" stroke="#2B2D30" stroke-width="1.2"/></svg>
<svg style="left:1878px;top:139px;" width="28" height="28" viewBox="0 0 28 28"><g fill="none" stroke="#CED0D6" stroke-width="1.8" stroke-linejoin="round" stroke-linecap="round"><path d="M9 26H3.5C2.7 26 2 25.3 2 24.5V3.5C2 2.7 2.7 2 3.5 2H13.5C14.3 2 15 2.7 15 3.5V9"/><path d="M6 6H9"/><path d="M11 26C11 20.5 15 17 19 17S27 20.5 27 26Z"/><path d="M14 15.5L15.5 17.5M24 15.5L22.5 17.5"/></g></svg>
<div class="abs" style="left:1869px;top:189px;width:45px;height:44px;background:#43454A;border-radius:8px;"></div>
<svg style="left:1877px;top:198px;" width="28" height="28" viewBox="0 0 28 28"><g fill="none" stroke="#CED0D6" stroke-width="1.8" stroke-linejoin="round" stroke-linecap="round"><path d="M8 24H3.5C2.7 24 2 23.3 2 22.5V3.5C2 2.7 2.7 2 3.5 2H11"/><path d="M5.5 5.5H8"/><rect x="10" y="12" width="14" height="8" rx="1"/><path d="M9 24H25M13 9V12"/></g><circle cx="23" cy="5" r="4.6" fill="#4FBA5A" stroke="#43454A" stroke-width="1"/></svg>
<svg style="left:1877px;top:258px;" width="28" height="28" viewBox="0 0 28 28"><path d="M14 1C14.8 8 20 13.2 27 14C20 14.8 14.8 20 14 27C13.2 20 8 14.8 1 14C8 13.2 13.2 8 14 1Z" fill="#DFE1E5"/></svg>
<div class="abs" style="left:21px;top:993px;width:12px;height:12px;background:#25324D;border-radius:3px;border:1.6px solid #548AF7"></div>
<div class="t" style="left:39.8px;top:989.49px;font-size:19.5px;color:#9DA0A8;font-weight:400;letter-spacing:0.918px;font-family:'Liberation Sans',sans-serif;">Arm-Unified-Task-Orchestrator</div>
<svg style="left:346px;top:991px;" width="8" height="13" viewBox="0 0 8 13"><path d="M1.5 1.5L6.5 6.5L1.5 11.5" stroke="#9DA0A8" stroke-width="1.5" fill="none" stroke-linecap="round" stroke-linejoin="round"/></svg>
<svg style="left:368px;top:993px;" width="26" height="13" viewBox="0 0 26 13"><path d="M0.3 12.2V0.8H3.5L6.9 6.8L10.3 0.8H13.5V12.2H10.7V5.8L8 10H5.8L3.1 5.8V12.2Z" fill="#548AF7"/><path d="M19.3 0.8V10.5M16 7L19.3 10.8L22.6 7" stroke="#548AF7" stroke-width="2.1" fill="none" stroke-linecap="round" stroke-linejoin="round"/></svg>
<div class="t" style="left:398.7px;top:989.49px;font-size:19.5px;color:#9DA0A8;font-weight:400;letter-spacing:-0.293px;font-family:'Liberation Sans',sans-serif;">README.md</div>
<div class="t" style="left:1484.5px;top:989.49px;font-size:19.5px;color:#9DA0A8;font-weight:400;letter-spacing:-1.370px;font-family:'Liberation Sans',sans-serif;">1:1</div>
<div class="t" style="left:1533px;top:989.49px;font-size:19.5px;color:#9DA0A8;font-weight:400;letter-spacing:-0.855px;font-family:'Liberation Sans',sans-serif;">CRLF</div>
<div class="t" style="left:1605px;top:989.49px;font-size:19.5px;color:#9DA0A8;font-weight:400;letter-spacing:0.510px;font-family:'Liberation Sans',sans-serif;">UTF-8</div>
<svg style="left:1687.5px;top:988.5px;" width="21" height="21" viewBox="0 0 21 21"><path d="M10.5 0.5C11.3 6 15 9.7 20.5 10.5C15 11.3 11.3 15 10.5 20.5C9.7 15 6 11.3 0.5 10.5C6 9.7 9.7 6 10.5 0.5Z" fill="#CED0D6" stroke="#CED0D6" stroke-width="1.2" stroke-linejoin="round"/></svg>
<svg style="left:1737px;top:988px;" width="24" height="22" viewBox="0 0 24 22"><g fill="none" stroke="#9DA0A8" stroke-width="1.6" stroke-linejoin="round" stroke-linecap="round"><path d="M9 19.5H3.5C2.4 19.5 1.5 18.6 1.5 17.5V3C1.5 1.9 2.4 1 3.5 1H10L15.5 6.5V10"/><path d="M10 1V6.5H15.5"/><circle cx="16.5" cy="16" r="2.3"/><path d="M16.5 11.5V12.5M16.5 19.5V20.5M12 16H13M20 16H21M13.3 12.8L14 13.5M19 18.5L19.7 19.2M13.3 19.2L14 18.5M19 13.5L19.7 12.8"/></g></svg>
<div class="t" style="left:1765px;top:989.49px;font-size:19.5px;color:#9DA0A8;font-weight:400;letter-spacing:0.530px;font-family:'Liberation Sans',sans-serif;">4 spaces</div>
<svg style="left:1874px;top:988px;" width="22" height="22" viewBox="0 0 22 22"><g fill="none" stroke="#CED0D6" stroke-width="1.7" stroke-linejoin="round" stroke-linecap="round"><rect x="1.5" y="9.5" width="13" height="10.5" rx="2"/><path d="M10.5 9.5V6C10.5 3.5 12.5 1.5 15 1.5S19.5 3.5 19.5 6V7.5M8 13.5V16"/></g></svg>
<div class="abs" style="left:0px;top:1020px;width:1920px;height:60px;background:linear-gradient(90deg,#1D2A24 0%,#1F2B24 30%,#25291F 50%,#2B2922 62%,#2A2922 72%,#232A22 84%,#1D2A25 100%);border-radius:0px;"></div>
<div class="abs" style="left:0px;top:1020px;width:1920px;height:60px;background:linear-gradient(180deg,rgba(0,0,0,.12),rgba(0,0,0,0));border-radius:0px;"></div>
<svg style="left:22px;top:1038px;" width="26" height="25" viewBox="0 0 26 25"><g fill="#FFFFFF"><path d="M0 3.5L10.5 2V12H0Z"/><path d="M12 1.8L26 0V12H12Z"/><path d="M0 13.5H10.5V23.5L0 22Z"/><path d="M12 13.5H26V25L12 23.2Z"/></g></svg>
<div class="abs" style="left:73px;top:1020px;width:430px;height:60px;background:#F3F3F3;border-radius:0px;border:1px solid #D8D8D8"></div>
<svg style="left:90px;top:1036px;" width="24" height="26" viewBox="0 0 24 26"><g stroke="#1A1A1A" stroke-width="1.8" fill="none" stroke-linecap="round"><circle cx="14" cy="9.5" r="8"/><path d="M8.5 15.5L1.5 23.5"/></g></svg>
<div class="t" style="left:132px;top:1041.88px;font-size:22px;color:#202020;font-weight:400;letter-spacing:0.134px;font-family:'Liberation Sans',sans-serif;">Type here to search</div>
<svg style="left:396px;top:1030px;" width="95" height="45" viewBox="0 0 95 45"><path d="M40 3C41.5 14 46 18.5 57 20C46 21.5 41.5 26 40 37C38.5 26 34 21.5 23 20C34 18.5 38.5 14 40 3Z" fill="#FFC83D"/>
<path d="M40 3C41.5 14 46 18.5 57 20C46 21.5 41.5 26 40 37" fill="#F5A623" opacity=".5"/>
<path d="M70 13C70.8 19 73 21 79 22C73 23 70.8 25 70 31C69.2 25 67 23 61 22C67 21 69.2 19 70 13Z" fill="#FFC83D"/>
<path d="M9 23C9.6 27.5 11 29 15.5 29.5C11 30 9.6 31.5 9 36C8.4 31.5 7 30 2.5 29.5C7 29 8.4 27.5 9 23Z" fill="#1E9BF0"/>
<circle cx="61" cy="5" r="3" fill="#F7630C"/><circle cx="88" cy="36" r="3" fill="#6BB700"/></svg>
<svg style="left:527px;top:1037px;" width="26" height="25" viewBox="0 0 26 25"><g stroke="#FFFFFF" stroke-width="1.6" fill="none"><rect x="2" y="5" width="16" height="15"/><path d="M0 2H20M0 23H20M24 0V25"/><path d="M22 12H26" stroke-width="3"/></g></svg>
<svg style="left:598px;top:1032px;" width="38" height="37" viewBox="0 0 38 37"><defs><linearGradient id="eg1" x1="0" y1="0" x2="1" y2="1"><stop offset="0" stop-color="#35C1F1"/><stop offset=".6" stop-color="#1E90D8"/><stop offset="1" stop-color="#66EB6E"/></linearGradient>
<linearGradient id="eg2" x1="0" y1="0" x2="1" y2="1"><stop offset="0" stop-color="#0C59A4"/><stop offset="1" stop-color="#114A8B"/></linearGradient></defs>
<path d="M19 1C29 1 37 8 37 17C37 22 33 25 28 25C23 25 19 23 19 19C19 17 21 16 21 14C21 11 17 9 13 9C7 9 2 14 1.5 19C2 9 9 1 19 1Z" fill="url(#eg1)"/>
<path d="M1.5 19C1.5 29 9.5 37 19.5 37C26 37 31.5 33.5 34 29C31 31 27 31.5 24 31C17 30 12 25 12 19C12 15 15 12 19 12C14 11 1.5 12 1.5 19Z" fill="url(#eg2)"/></svg>
<div class="abs" style="left:587px;top:1077px;width:61px;height:3px;background:#76B9ED;border-radius:0px;"></div>
<svg style="left:675px;top:1037px;" width="34" height="27" viewBox="0 0 34 27"><path d="M1 3C1 1.9 1.9 1 3 1H12L15 4H31C32.1 4 33 4.9 33 6V24C33 25.1 32.1 26 31 26H3C1.9 26 1 25.1 1 24Z" fill="#FFC933"/><path d="M1 8H33V24C33 25.1 32.1 26 31 26H3C1.9 26 1 25.1 1 24Z" fill="#FFD75E"/><path d="M1 3C1 1.9 1.9 1 3 1H12L15 4H13L10 7H1Z" fill="#E8A41D"/><rect x="10" y="15" width="15" height="11" fill="#2B7ADB"/><rect x="13" y="19" width="9" height="7" fill="#FFD75E"/></svg>
<svg style="left:749px;top:1032px;" width="40" height="40" viewBox="0 0 40 40"><rect x="0" y="0" width="36" height="36" rx="7" fill="#141212"/>
<path d="M18 5L29 11V24L18 30L7 24V11Z" fill="#8C8C8C"/><path d="M18 5L29 11L18 17L7 11Z" fill="#CFCFCF"/><path d="M7 11L18 17V30L7 24Z" fill="#6E6E6E"/>
<circle cx="27" cy="27" r="11" fill="#2D2D35" stroke="#141212" stroke-width="1.5"/></svg>
<div class="t" style="left:771px;top:1054.61px;font-size:17px;color:#FFFFFF;font-weight:700;letter-spacing:0.000px;font-family:'Liberation Sans',sans-serif;">1</div>
<div class="abs" style="left:737px;top:1077px;width:61px;height:3px;background:#76B9ED;border-radius:0px;"></div>
<svg style="left:825px;top:1033px;" width="35" height="35" viewBox="0 0 35 35"><circle cx="17.5" cy="17.5" r="17" fill="#7E3FB8"/><circle cx="17.5" cy="17.5" r="13" fill="#A175D6" opacity=".35"/><path d="M17.5 6.5C11.4 6.5 6.5 11.4 6.5 17.5C6.5 22.4 9.7 26.5 14 27.9C14.6 28 14.8 27.7 14.8 27.4V25.5C11.7 26.2 11.1 24.2 11.1 24.2C10.6 22.9 9.9 22.6 9.9 22.6C8.9 21.9 10 21.9 10 21.9C11.1 22 11.7 23 11.7 23C12.7 24.7 14.3 24.2 14.9 23.9C15 23.2 15.3 22.7 15.6 22.4C13.2 22.1 10.6 21.2 10.6 17C10.6 15.8 11 14.8 11.7 14.1C11.6 13.8 11.2 12.7 11.8 11.2C11.8 11.2 12.7 10.9 14.8 12.3C15.7 12.1 16.6 11.9 17.5 11.9C18.4 11.9 19.3 12 20.2 12.3C22.3 10.9 23.2 11.2 23.2 11.2C23.8 12.7 23.4 13.8 23.3 14.1C24 14.8 24.4 15.8 24.4 17C24.4 21.2 21.8 22.1 19.4 22.4C19.8 22.7 20.1 23.4 20.1 24.4V27.4C20.1 27.7 20.3 28.1 20.9 27.9C25.3 26.5 28.5 22.4 28.5 17.5C28.5 11.4 23.6 6.5 17.5 6.5Z" fill="#FFFFFF"/></svg>
<div class="abs" style="left:812px;top:1077px;width:61px;height:3px;background:#76B9ED;border-radius:0px;"></div>
<div class="abs" style="left:881px;top:1020px;width:73px;height:60px;background:rgba(255,255,255,.17);border-radius:0px;"></div>
<svg style="left:899px;top:1031px;" width="36" height="36" viewBox="0 0 36 36"><path d="M18 0.5L21 2.5L24.5 2L26.5 4.5L30 5.5L30.5 9L33 11.5L32.5 15L34.5 18L32.5 21L33 24.5L30.5 27L30 30.5L26.5 31.5L24.5 34L21 33.5L18 35.5L15 33.5L11.5 34L9.5 31.5L6 30.5L5.5 27L3 24.5L3.5 21L1.5 18L3.5 15L3 11.5L5.5 9L6 5.5L9.5 4.5L11.5 2L15 2.5Z" fill="#FFFFFF"/><path d="M18 8L10.5 28M18 8L25.5 28M12.5 21.5H23.5" stroke="#4285F4" stroke-width="2.6" fill="none" stroke-linecap="round"/><circle cx="18" cy="9" r="2.2" fill="#fff" stroke="#444" stroke-width="1"/><path d="M24 14L28 13.5L27 17.5Z" fill="#3DDC84"/></svg>
<div class="abs" style="left:881px;top:1077px;width:73px;height:3px;background:#76B9ED;border-radius:0px;"></div>
<svg style="left:1231px;top:1031px;" width="38" height="37" viewBox="0 0 38 37"><defs><linearGradient id="mn" x1="0" y1="1" x2="1" y2="0"><stop offset="0" stop-color="#F7931E"/><stop offset="1" stop-color="#FBC531"/></linearGradient>
<linearGradient id="cl" x1="0" y1="0" x2="0" y2="1"><stop offset="0" stop-color="#8DB4F0"/><stop offset=".5" stop-color="#B2D0F8"/><stop offset="1" stop-color="#7FA8EC"/></linearGradient></defs>
<path d="M14.2 1.1C19 4 21 9.5 19.5 14.5C18 19.5 13 22.5 8 22C5.5 21.7 3 20.5 1 18.8C4.5 19.5 8.5 18.5 11.2 15.8C14.8 12.2 16 6.5 14.2 1.1Z" fill="url(#mn)"/>
<path d="M9 17.5C10 14.5 12.8 12.3 16.2 12.3C19.2 12.3 21.8 14.1 23 16.8C23.8 16.4 24.7 16.2 25.7 16.2C29.3 16.2 32.2 18.8 32.5 22.3C35 23 36.8 25.3 36.8 28C36.8 31.3 34.1 34 30.8 34H7C3.5 34 0.8 31.2 0.8 27.8C0.8 24.4 3.5 21.6 6.9 21.6C7.2 20 7.9 18.6 9 17.5Z" fill="url(#cl)"/></svg>
<div class="abs" style="left:1250.4px;top:1032.1px;width:17.5px;height:17.5px;border-radius:50%;background:#D0281C"></div>
<div class="t" style="left:1255.3px;top:1035.50px;font-size:13px;color:#FFFFFF;font-weight:700;letter-spacing:0.000px;font-family:'Liberation Sans',sans-serif;">6</div>
<div class="t" style="left:1281px;top:1041.25px;font-size:20.5px;color:#FFFFFF;font-weight:400;letter-spacing:-0.184px;font-family:'Liberation Sans',sans-serif;">-4°C</div>
<div class="t" style="left:1334px;top:1041.25px;font-size:20.5px;color:#FFFFFF;font-weight:400;letter-spacing:0.370px;font-family:'Liberation Sans',sans-serif;">Mostly cloudy</div>
<svg style="left:1500px;top:1042px;" width="20" height="11" viewBox="0 0 20 11"><path d="M1 10L10 1.5L19 10" stroke="#FFFFFF" stroke-width="1.6" fill="none"/></svg>
<svg style="left:1534px;top:1038px;" width="26" height="24" viewBox="0 0 26 24"><path d="M5 17C2.5 17 1 15.3 1 13.2C1 11 2.7 9.5 4.8 9.5C5.5 6.5 8 4.5 11 4.5C14.5 4.5 17 7 17.5 10C19.5 10 21 11.5 21 13.5C21 15.5 19.5 17 17.5 17Z" fill="#D0D6DC"/><circle cx="18.5" cy="17.5" r="6.5" fill="#1E7FD6"/><path d="M15.5 16.5C15.8 15 17 14 18.5 14C19.5 14 20.3 14.5 20.8 15.2M21.5 18.5C21.2 20 20 21 18.5 21C17.5 21 16.7 20.5 16.2 19.8" stroke="#fff" stroke-width="1.3" fill="none"/></svg>
<svg style="left:1569px;top:1039px;" width="26" height="20" viewBox="0 0 26 20"><g stroke="#FFFFFF" stroke-width="1.5" fill="none"><rect x="2" y="8" width="21" height="10" rx="1"/><path d="M23.5 11V15"/><path d="M6 2V6M9 2V6M4.5 6H10.5"/></g><rect x="4" y="10" width="17" height="6" fill="#FFFFFF"/></svg>
<svg style="left:1609px;top:1040px;" width="23" height="22" viewBox="0 0 23 22"><g stroke="#FFFFFF" stroke-width="1.5" fill="none"><path d="M1.5 20C1.5 10 10 1.5 20.5 1.5" opacity=".8"/><path d="M6 20C6 12.5 12.5 6 20.5 6"/><path d="M10.5 20C10.5 15 15 10.5 20.5 10.5"/><path d="M15 20C15 17.3 17.5 15 20.5 15"/></g><circle cx="20" cy="19.5" r="1.8" fill="#fff"/></svg>
<svg style="left:1643px;top:1038px;" width="24" height="23" viewBox="0 0 24 23"><g stroke="#FFFFFF" stroke-width="1.5" fill="none" stroke-linejoin="round"><path d="M1 8H5L11 2.5V20.5L5 15H1Z"/><path d="M14 8.5C15.3 10 15.3 13 14 14.5M17 6C19.5 8.5 19.5 14.5 17 17M20 3.5C23.8 7.5 23.8 15.5 20 19.5"/></g></svg>
<div class="t" style="left:1682.6px;top:1040.09px;font-size:19.5px;color:#FFFFFF;font-weight:400;letter-spacing:-3.089px;font-family:'Liberation Sans',sans-serif;">ENG</div>
<div class="t" style="left:1751px;top:1026.49px;font-size:19.5px;color:#FFFFFF;font-weight:400;letter-spacing:-1.232px;font-family:'Liberation Sans',sans-serif;">5:22 PM</div>
<div class="t" style="left:1736.4px;top:1054.49px;font-size:19.5px;color:#FFFFFF;font-weight:400;letter-spacing:-0.725px;font-family:'Liberation Sans',sans-serif;">2025-12-01</div>
<svg style="left:1858px;top:1035px;" width="38" height="38" viewBox="0 0 38 38"><path d="M2 2H30V20H14L8 26V20H2Z" fill="#FFFFFF"/><g stroke="#222" stroke-width="1.2"><path d="M7 8H25M7 12H25M7 16H18"/></g><circle cx="24" cy="24" r="11" fill="#252525" stroke="#8A8A8A" stroke-width="1.3"/></svg>
<div class="t" style="left:1876.5px;top:1053.42px;font-size:19px;color:#FFFFFF;font-weight:700;letter-spacing:0.000px;font-family:'Liberation Sans',sans-serif;">5</div>
<div class="abs" style="left:1911px;top:1025px;width:1px;height:55px;background:#8A8F8A;border-radius:0px;"></div>
</body></html>
